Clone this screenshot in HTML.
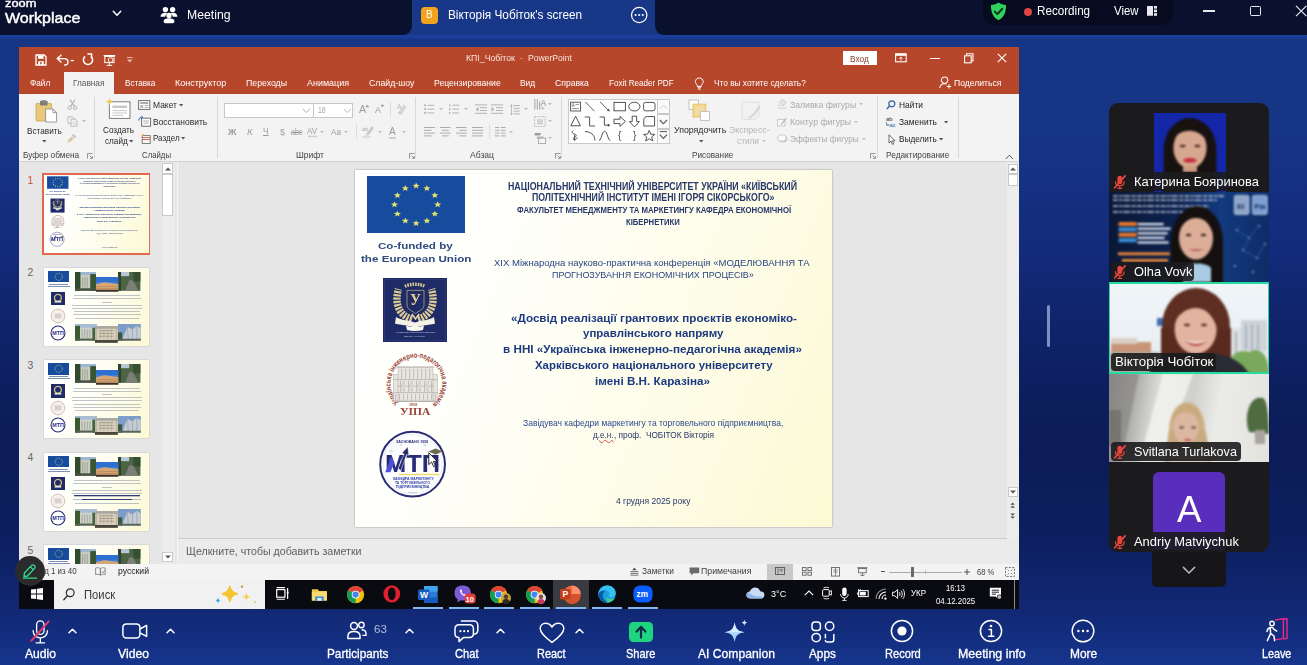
<!DOCTYPE html>
<html lang="uk">
<head>
<meta charset="utf-8">
<title>Zoom Meeting</title>
<style>
*{box-sizing:border-box;margin:0;padding:0}
html,body{width:1307px;height:665px;overflow:hidden}
body{position:relative;font-family:"Liberation Sans","DejaVu Sans",sans-serif;background:linear-gradient(180deg,#173585 0px,#173585 130px,#132b7b 250px,#0f2369 330px,#0d1e5d 400px,#0c1c58 450px,#0d1f60 540px,#112874 610px,#16358c 665px);color:#fff}
.abs{position:absolute}
.t{position:absolute;white-space:nowrap;transform-origin:0 0}
svg{overflow:visible}
svg text{font-family:"Liberation Sans","DejaVu Sans",sans-serif}
</style>
</head>
<body>
<div class="abs" style="left:0.00px;top:0.00px;width:1307.00px;height:35.00px;background:#0a112e;"></div>
<div class="abs" style="left:404.00px;top:0.00px;width:260.00px;height:35.00px;background:#183887;"></div>
<div class="abs" style="left:388.00px;top:0.00px;width:24.00px;height:35.00px;background:#0a112e;border-radius:0 0 9px 0"></div>
<div class="abs" style="left:655.00px;top:0.00px;width:24.00px;height:35.00px;background:#0a112e;border-radius:0 0 0 9px"></div>
<div class="abs" style="left:0.00px;top:35.00px;width:1307.00px;height:4.20px;background:linear-gradient(180deg,#1c42a2,#193b94);opacity:.85"></div>
<div class="t" id="t1" style="transform:scaleX(1.0846);left:5.00px;top:-3.67px;font-size:11.80px;line-height:14.16px;color:#fff;-webkit-text-stroke:.4px #fff;">zoom</div>
<div class="t" id="t2" style="transform:scaleX(1.0397);left:5.00px;top:8.72px;font-size:15.40px;line-height:18.48px;color:#fff;-webkit-text-stroke:.45px #fff;">Workplace</div>
<svg class="abs" style="left:111.00px;top:8.00px;" width="12" height="10" viewBox="0 0 12 10"><path d="M2.3 3.3 L6 7.2 L9.7 3.3" fill="none" stroke="#fff" stroke-width="1.5" stroke-linecap="round" stroke-linejoin="round"/></svg>
<svg class="abs" style="left:160.00px;top:6.00px;" width="18" height="18" viewBox="0 0 18 18"><g fill="#fff"><circle cx="5.4" cy="3.6" r="2.7"/><circle cx="12.6" cy="3.6" r="2.7"/>
<path d="M0.6 10.8 C0.6 7.9 2.8 6.8 5.4 6.8 C6.4 6.8 7.3 7 7.9 7.3 C6.5 8 5.5 9.1 5.2 10.8 Z"/>
<path d="M17.4 10.8 C17.4 7.9 15.2 6.8 12.6 6.8 C11.6 6.8 10.7 7 10.1 7.3 C11.5 8 12.5 9.1 12.8 10.8 Z"/>
<circle cx="9" cy="9.4" r="2.6"/>
<path d="M3.6 15.6 C3.6 13.2 5.9 12.3 9 12.3 C12.1 12.3 14.4 13.2 14.4 15.6 C14.4 16.7 13.6 17.3 12.6 17.3 L5.4 17.3 C4.4 17.3 3.6 16.7 3.6 15.6 Z"/></g></svg>
<div class="t" id="t3" style="transform:scaleX(0.9405);left:187.30px;top:7.00px;font-size:13.00px;line-height:15.60px;color:#fff;">Meeting</div>
<div class="abs" style="left:421.00px;top:6.50px;width:17.00px;height:17.00px;background:#f2a31d;border-radius:4px"></div>
<div class="t" id="t4" style="transform:scaleX(0.9892);left:426.20px;top:9.14px;font-size:10.00px;line-height:12.00px;color:#fff;">В</div>
<div class="t" id="t5" style="transform:scaleX(0.9074);left:447.50px;top:6.90px;font-size:13.00px;line-height:15.60px;color:#fff;">Вікторія Чобіток's screen</div>
<svg class="abs" style="left:630.00px;top:6.00px;" width="18" height="18" viewBox="0 0 18 18"><circle cx="9.2" cy="9" r="7.7" fill="none" stroke="#fff" stroke-width="1.2"/><circle cx="5.6" cy="9" r="1.05" fill="#fff"/><circle cx="9.2" cy="9" r="1.05" fill="#fff"/><circle cx="12.8" cy="9" r="1.05" fill="#fff"/></svg>
<div class="abs" style="left:983.00px;top:-10.00px;width:190.00px;height:35.00px;background:#060b20;border-radius:12px"></div>
<svg class="abs" style="left:989.00px;top:2.00px;" width="19" height="19" viewBox="0 0 19 19"><path d="M9.5 0.6 C11.5 2.2 14 2.9 17 3 C17.2 10 15 15.5 9.5 18.2 C4 15.5 1.8 10 2 3 C5 2.9 7.5 2.2 9.5 0.6 Z" fill="#2fd15a"/><path d="M5.8 9.6 L8.4 12.2 L13.2 6.8" fill="none" stroke="#0d2a1a" stroke-width="1.9" stroke-linecap="round" stroke-linejoin="round"/></svg>
<div class="abs" style="left:1023.70px;top:7.80px;width:8.50px;height:8.50px;background:#e0443e;border-radius:50%"></div>
<div class="t" id="t6" style="transform:scaleX(0.8960);left:1036.70px;top:3.10px;font-size:13.00px;line-height:15.60px;color:#fff;">Recording</div>
<div class="t" id="t7" style="transform:scaleX(0.8765);left:1114.30px;top:3.10px;font-size:13.00px;line-height:15.60px;color:#fff;">View</div>
<svg class="abs" style="left:1146.00px;top:5.00px;" width="12" height="12" viewBox="0 0 12 12"><g fill="#e8e8ee"><rect x="1" y="1" width="6" height="9.8" rx=".6"/><rect x="8" y="1" width="3" height="2.6"/><rect x="8" y="4.6" width="3" height="2.6"/><rect x="8" y="8.2" width="3" height="2.6"/></g></svg>
<div class="abs" style="left:1203.30px;top:10.20px;width:12.00px;height:1.60px;background:#e6e8f0;"></div>
<div class="abs" style="left:1250.00px;top:5.80px;width:10.50px;height:10.50px;background:transparent;border:1.4px solid #e6e8f0;border-radius:1.5px"></div>
<svg class="abs" style="left:1295.00px;top:5.00px;" width="12" height="12" viewBox="0 0 12 12"><path d="M1 .8 L11.4 11.2 M11.4 .8 L1 11.2" stroke="#e6e8f0" stroke-width="1.2" fill="none"/></svg>
<div class="abs" style="left:1047.00px;top:305.00px;width:3.00px;height:42.00px;background:#7f8fc4;border-radius:2px"></div>
<div class="abs" style="left:19.00px;top:47.00px;width:1000.00px;height:47.00px;background:#b7472a;"></div>
<div class="abs" style="left:19.00px;top:94.00px;width:1000.00px;height:67.00px;background:#f3f3f3;"></div>
<div class="abs" style="left:19.00px;top:160.50px;width:1000.00px;height:1.00px;background:#d2d2d2;"></div>
<div class="abs" style="left:19.00px;top:161.50px;width:1000.00px;height:402.00px;background:#e6e6e6;"></div>
<svg class="abs" style="left:34.50px;top:53.50px;" width="12" height="12" viewBox="0 0 12 12"><path d="M1 1 H9.2 L11 2.8 V11 H1 Z" fill="none" stroke="#fff" stroke-width="1.3"/><rect x="3" y="1.4" width="5.6" height="3.4" fill="#fff"/><rect x="3.2" y="7.2" width="5.6" height="3.6" fill="#fff"/><rect x="5.2" y="8" width="1.4" height="2.2" fill="#b7472a"/></svg>
<svg class="abs" style="left:55.50px;top:53.50px;" width="19" height="12" viewBox="0 0 19 12"><path d="M1.2 4.6 L5 1.2 M1.2 4.6 L5 8 M1.4 4.6 H8 C10.6 4.6 12 6.3 12 8 C12 9.9 10.6 11 8.6 11" fill="none" stroke="#fff" stroke-width="1.4" stroke-linecap="round"/><rect x="14.6" y="6" width="3.2" height="1.2" fill="#fff"/></svg>
<svg class="abs" style="left:81.50px;top:53.00px;" width="12" height="13" viewBox="0 0 12 13"><path d="M3.1 3.4 A4.6 4.6 0 1 0 8.9 3.4" fill="none" stroke="#fff" stroke-width="1.5"/><path d="M5.4 1 H9.6 V5.2" fill="none" stroke="#fff" stroke-width="1.4"/></svg>
<svg class="abs" style="left:102.50px;top:53.50px;" width="13" height="13" viewBox="0 0 13 13"><rect x=".6" y="1" width="11.6" height="1.3" fill="#fff"/><rect x="1.8" y="2.4" width="9.2" height="6.2" fill="none" stroke="#fff" stroke-width="1"/><circle cx="7.6" cy="6" r="2.3" fill="#b7472a" stroke="#fff" stroke-width=".9"/><path d="M6.4 8.6 V11 M3.6 11.4 H9.2" stroke="#fff" stroke-width="1"/></svg>
<svg class="abs" style="left:125.50px;top:56.00px;" width="8" height="8" viewBox="0 0 8 8"><rect x="1" y="1" width="5.6" height="1" fill="#e8b8a8"/><path d="M1 3.6 H6.6 L3.8 6.4 Z" fill="#e8b8a8"/></svg>
<div class="t" id="t8" style="transform:scaleX(0.9831);left:465.60px;top:53.28px;font-size:8.90px;line-height:10.68px;color:#f6e6e0;">КПІ_Чобіток</div>
<div class="t" id="t9" style="transform:scaleX(0.8758);left:520.00px;top:53.28px;font-size:8.90px;line-height:10.68px;color:#e3b3a5;">-</div>
<div class="t" id="t10" style="transform:scaleX(0.9650);left:527.50px;top:53.28px;font-size:8.90px;line-height:10.68px;color:#f6e6e0;">PowerPoint</div>
<div class="abs" style="left:842.50px;top:51.00px;width:34.80px;height:14.00px;background:#fff;"></div>
<div class="t" id="t11" style="transform:scaleX(0.9664);left:850.20px;top:54.06px;font-size:8.60px;line-height:10.32px;color:#8a3a28;">Вход</div>
<svg class="abs" style="left:895.00px;top:53.00px;" width="12" height="10" viewBox="0 0 12 10"><rect x=".6" y=".8" width="10.6" height="8" fill="none" stroke="#fff" stroke-width="1.1"/><rect x=".6" y=".8" width="10.6" height="2" fill="#fff"/><path d="M5.9 7.6 V4.2 M4.3 5.6 L5.9 4 L7.5 5.6" stroke="#fff" stroke-width=".9" fill="none"/></svg>
<div class="abs" style="left:929.80px;top:58.20px;width:10.20px;height:1.20px;background:#fff;"></div>
<svg class="abs" style="left:963.50px;top:52.50px;" width="10" height="11" viewBox="0 0 10 11"><rect x=".6" y="2.8" width="6.6" height="7" fill="none" stroke="#fff" stroke-width="1.1"/><path d="M2.6 2.6 V.8 H9 V8 H7.4" fill="none" stroke="#fff" stroke-width="1.1"/></svg>
<svg class="abs" style="left:996.50px;top:53.00px;" width="10" height="10" viewBox="0 0 10 10"><path d="M.8 .8 L9.2 9.2 M9.2 .8 L.8 9.2" stroke="#fff" stroke-width="1.15"/></svg>
<div class="abs" style="left:63.60px;top:71.80px;width:50.60px;height:23.00px;background:#f3f3f3;"></div>
<div class="t" id="t12" style="transform:scaleX(0.8880);left:30.30px;top:78.30px;font-size:9.30px;line-height:11.16px;color:#fff;">Файл</div>
<div class="t" id="t13" style="transform:scaleX(0.8767);left:124.70px;top:78.30px;font-size:9.30px;line-height:11.16px;color:#fff;">Вставка</div>
<div class="t" id="t14" style="transform:scaleX(0.9658);left:175.30px;top:78.30px;font-size:9.30px;line-height:11.16px;color:#fff;">Конструктор</div>
<div class="t" id="t15" style="transform:scaleX(0.9402);left:246.00px;top:78.30px;font-size:9.30px;line-height:11.16px;color:#fff;">Переходы</div>
<div class="t" id="t16" style="transform:scaleX(0.9621);left:306.60px;top:78.30px;font-size:9.30px;line-height:11.16px;color:#fff;">Анимация</div>
<div class="t" id="t17" style="transform:scaleX(0.9398);left:368.70px;top:78.30px;font-size:9.30px;line-height:11.16px;color:#fff;">Слайд-шоу</div>
<div class="t" id="t18" style="transform:scaleX(0.9290);left:434.30px;top:78.30px;font-size:9.30px;line-height:11.16px;color:#fff;">Рецензирование</div>
<div class="t" id="t19" style="transform:scaleX(0.9032);left:520.20px;top:78.30px;font-size:9.30px;line-height:11.16px;color:#fff;">Вид</div>
<div class="t" id="t20" style="transform:scaleX(0.9292);left:554.50px;top:78.30px;font-size:9.30px;line-height:11.16px;color:#fff;">Справка</div>
<div class="t" id="t21" style="transform:scaleX(0.8682);left:608.60px;top:78.30px;font-size:9.30px;line-height:11.16px;color:#fff;">Foxit Reader PDF</div>
<div class="t" id="t22" style="transform:scaleX(0.8872);left:73.20px;top:78.30px;font-size:9.30px;line-height:11.16px;color:#5a5a5a;">Главная</div>
<svg class="abs" style="left:694.00px;top:76.50px;" width="11" height="13" viewBox="0 0 11 13"><path d="M5.3 1 C2.8 1 1.4 2.8 1.4 4.6 C1.4 6.2 2.6 7 3.2 8.4 V9.4 H7.4 V8.4 C8 7 9.2 6.2 9.2 4.6 C9.2 2.8 7.8 1 5.3 1 Z M3.6 10.8 H7 M4.2 12.2 H6.4" fill="none" stroke="#fff" stroke-width="1"/></svg>
<div class="t" id="t23" style="transform:scaleX(0.8932);left:714.00px;top:78.30px;font-size:9.30px;line-height:11.16px;color:#fff;">Что вы хотите сделать?</div>
<svg class="abs" style="left:938.50px;top:76.00px;" width="13" height="13" viewBox="0 0 13 13"><circle cx="5.6" cy="4.2" r="3.2" fill="none" stroke="#fff" stroke-width="1.05"/><path d="M.8 12 C1 9.2 3 7.8 5.6 7.8 C6.4 7.8 7 7.9 7.6 8.1" fill="none" stroke="#fff" stroke-width="1.05"/><path d="M10 8.2 V12.6 M7.8 10.4 H12.2" stroke="#fff" stroke-width="1.05"/></svg>
<div class="t" id="t24" style="transform:scaleX(0.9232);left:953.80px;top:78.30px;font-size:9.30px;line-height:11.16px;color:#fff;">Поделиться</div>
<svg class="abs" style="left:34.50px;top:99.50px;" width="22.5" height="22.5" viewBox="0 0 22.5 22.5"><rect x="1" y="3.4" width="15.6" height="17.6" rx="1" fill="#e9c77b" stroke="#c9a356" stroke-width=".8"/>
<rect x="5" y=".8" width="7.6" height="4.6" rx="1" fill="#7c7c7c"/><rect x="6.8" y="0" width="4" height="2.2" rx="1" fill="#8d8d8d"/>
<path d="M10.6 9 H18 L21.6 12.6 V22 H10.6 Z" fill="#fff" stroke="#8e8e8e" stroke-width=".9"/><path d="M18 9 V12.6 H21.6" fill="none" stroke="#8e8e8e" stroke-width=".9"/></svg>
<div class="t" id="t25" style="transform:scaleX(0.8556);left:26.60px;top:124.51px;font-size:9.60px;line-height:11.52px;color:#2b2b2b;">Вставить</div>
<svg class="abs" style="left:41.55px;top:139.74px;" width="4.5" height="2.7" viewBox="0 0 5 3"><path d="M0 0 H5 L2.5 2.8 Z" fill="#555"/></svg>
<svg class="abs" style="left:67.00px;top:98.50px;" width="11" height="11" viewBox="0 0 11 11"><path d="M3 .6 L7.4 7.4 M8 .6 L3.6 7.4" stroke="#b5b5b5" stroke-width="1.1"/><circle cx="2.8" cy="8.8" r="1.7" fill="none" stroke="#b5b5b5" stroke-width="1"/><circle cx="8.2" cy="8.8" r="1.7" fill="none" stroke="#b5b5b5" stroke-width="1"/></svg>
<svg class="abs" style="left:66.50px;top:116.00px;" width="11" height="11" viewBox="0 0 11 11"><path d="M1 .8 H5.4 L7 2.4 V7.6 H1 Z" fill="#f6f6f6" stroke="#b5b5b5" stroke-width=".9"/><path d="M4 3.2 H8.4 L10 4.8 V10.2 H4 Z" fill="#f6f6f6" stroke="#b5b5b5" stroke-width=".9"/><path d="M5.4 6 H8.6 M5.4 7.8 H8.6" stroke="#c4c4c4" stroke-width=".7"/></svg>
<svg class="abs" style="left:81.60px;top:120.48px;" width="4" height="2.4" viewBox="0 0 5 3"><path d="M0 0 H5 L2.5 2.8 Z" fill="#bdbdbd"/></svg>
<svg class="abs" style="left:66.50px;top:132.50px;" width="11" height="10" viewBox="0 0 11 10"><path d="M6.4 .8 L9.6 3.6 L7.8 5.6 L4.6 2.8 Z" fill="#c9c9c9"/><path d="M4.4 3.6 L6.8 5.8 L3 9.2 L.8 9.4 L1 7 Z" fill="#d9c9a5"/></svg>
<div class="t" id="t26" style="transform:scaleX(0.9001);left:22.80px;top:149.89px;font-size:9.20px;line-height:11.04px;color:#444;">Буфер обмена</div>
<svg class="abs" style="left:86.60px;top:153.00px;" width="6" height="6" viewBox="0 0 6 6"><path d="M.5 5.5 V.5 H5.5" fill="none" stroke="#8a8a8a" stroke-width=".9"/><path d="M2.4 2.4 L5.2 5.2 M5.4 3 V5.4 H3" fill="none" stroke="#8a8a8a" stroke-width=".9"/></svg>
<div class="abs" style="left:94.30px;top:97.00px;width:1.00px;height:61.00px;background:#d8d8d8;"></div>
<svg class="abs" style="left:105.50px;top:97.50px;" width="25" height="22" viewBox="0 0 25 22"><rect x="3.4" y="3.8" width="20.6" height="16.6" fill="#fff" stroke="#7d7d7d" stroke-width="1"/>
<rect x="6.4" y="7.6" width="14.6" height="2.4" fill="#c8c8c8"/><path d="M6.4 12.6 H21 M6.4 15 H21 M6.4 17.4 H17" stroke="#c2c2c2" stroke-width=".9"/>
<path d="M3.6 0 L4.6 2.6 L7.2 3.6 L4.6 4.6 L3.6 7.2 L2.6 4.6 L0 3.6 L2.6 2.6 Z" fill="#f4c542"/></svg>
<div class="t" id="t27" style="transform:scaleX(0.8500);left:103.00px;top:123.71px;font-size:9.60px;line-height:11.52px;color:#2b2b2b;">Создать</div>
<div class="t" id="t28" style="transform:scaleX(0.8506);left:104.90px;top:135.41px;font-size:9.60px;line-height:11.52px;color:#2b2b2b;">слайд</div>
<svg class="abs" style="left:129.35px;top:140.34px;" width="4.5" height="2.7" viewBox="0 0 5 3"><path d="M0 0 H5 L2.5 2.8 Z" fill="#555"/></svg>
<svg class="abs" style="left:138.00px;top:99.50px;" width="12.5" height="10" viewBox="0 0 12.5 10"><rect x=".6" y=".6" width="11.2" height="8.8" fill="#fff" stroke="#6e6e6e" stroke-width="1"/><rect x="2.2" y="2.2" width="8" height="1.6" fill="#9a9a9a"/><rect x="2.2" y="5" width="3.2" height="3" fill="#bdbdbd"/><path d="M6.6 5.4 H10.2 M6.6 7.4 H10.2" stroke="#9a9a9a" stroke-width=".8"/></svg>
<div class="t" id="t29" style="transform:scaleX(0.8838);left:152.80px;top:98.81px;font-size:9.60px;line-height:11.52px;color:#2b2b2b;">Макет</div>
<svg class="abs" style="left:178.68px;top:103.61px;" width="4.25" height="2.55" viewBox="0 0 5 3"><path d="M0 0 H5 L2.5 2.8 Z" fill="#555"/></svg>
<svg class="abs" style="left:137.50px;top:116.00px;" width="13" height="11" viewBox="0 0 13 11"><rect x="3.6" y="2.2" width="9" height="8" fill="#fff" stroke="#6e6e6e" stroke-width="1"/><path d="M5.4 5 H10.8 M5.4 7.2 H10.8" stroke="#9a9a9a" stroke-width=".8"/><path d="M.8 4.6 C.8 2 2.6 .8 4.6 1.2 M3.4 0 L4.8 1.2 L3.4 2.6" fill="none" stroke="#2f72c4" stroke-width="1"/></svg>
<div class="t" id="t30" style="transform:scaleX(0.8822);left:152.80px;top:115.81px;font-size:9.60px;line-height:11.52px;color:#2b2b2b;">Восстановить</div>
<svg class="abs" style="left:141.00px;top:132.50px;" width="10" height="11" viewBox="0 0 10 11"><rect x="1.2" y="2.6" width="8" height="7.8" fill="#fff" stroke="#6e6e6e" stroke-width=".9"/><path d="M1.2 4.6 H9.2 M1.2 6.6 H9.2" stroke="#c0573a" stroke-width=".9"/><path d="M1.6 0 L2.1 1.2 L3.3 1.7 L2.1 2.2 L1.6 3.4 L1.1 2.2 L0 1.7 L1.1 1.2 Z" fill="#f4c542"/></svg>
<div class="t" id="t31" style="transform:scaleX(0.8386);left:152.80px;top:132.21px;font-size:9.60px;line-height:11.52px;color:#2b2b2b;">Раздел</div>
<svg class="abs" style="left:181.28px;top:137.01px;" width="4.25" height="2.55" viewBox="0 0 5 3"><path d="M0 0 H5 L2.5 2.8 Z" fill="#555"/></svg>
<div class="t" id="t32" style="transform:scaleX(0.8479);left:141.50px;top:149.89px;font-size:9.20px;line-height:11.04px;color:#444;">Слайды</div>
<div class="abs" style="left:217.20px;top:97.00px;width:1.00px;height:61.00px;background:#d8d8d8;"></div>
<div class="abs" style="left:224.00px;top:102.60px;width:89.60px;height:15.40px;background:#fff;border:1px solid #c8c8c8"></div>
<div class="abs" style="left:313.00px;top:102.60px;width:40.00px;height:15.40px;background:#fff;border:1px solid #c8c8c8"></div>
<svg class="abs" style="left:301.50px;top:107.50px;" width="9" height="6" viewBox="0 0 9 6"><path d="M.8 .8 L4.4 4.6 L8 .8" fill="none" stroke="#b5b5b5" stroke-width="1"/></svg>
<svg class="abs" style="left:343.00px;top:107.50px;" width="9" height="6" viewBox="0 0 9 6"><path d="M.8 .8 L4.4 4.6 L8 .8" fill="none" stroke="#b5b5b5" stroke-width="1"/></svg>
<div class="t" id="t33" style="transform:scaleX(0.7860);left:318.20px;top:105.07px;font-size:8.80px;line-height:10.56px;color:#a8a8a8;">18</div>
<div class="t" id="t34" style="transform:scaleX(1.0263);left:358.60px;top:103.36px;font-size:10.50px;line-height:12.60px;color:#9d9d9d;">A</div>
<svg class="abs" style="left:364.80px;top:104.00px;" width="5" height="4" viewBox="0 0 5 4"><path d="M.4 3.2 L2.4 .8 L4.4 3.2 Z" fill="#9d9d9d"/></svg>
<div class="t" id="t35" style="transform:scaleX(0.9974);left:375.00px;top:104.78px;font-size:9.00px;line-height:10.80px;color:#9d9d9d;">A</div>
<svg class="abs" style="left:380.20px;top:104.40px;" width="5" height="4" viewBox="0 0 5 4"><path d="M.4 .8 L2.4 3.2 L4.4 .8 Z" fill="#9d9d9d"/></svg>
<div class="abs" style="left:390.20px;top:102.00px;width:1.00px;height:15.00px;background:#dcdcdc;"></div>
<svg class="abs" style="left:396.50px;top:103.00px;" width="11" height="12" viewBox="0 0 11 12"><path d="M2 8.6 L6.6 1.4 L9.8 3.6 L5.4 10.6 Z" fill="#d6d6d6"/><path d="M.8 10.8 L2 8.6 L5.4 10.6 L4.4 11.6 Z" fill="#e5bcc0"/><text x="0" y="6" font-size="6.5" fill="#bdbdbd">A</text></svg>
<div class="t" id="t36" style="transform:scaleX(0.9686);left:228.00px;top:126.11px;font-size:9.60px;line-height:11.52px;color:#9b9b9b;font-weight:700;">Ж</div>
<div class="t" id="t37" style="transform:scaleX(1.0077);left:247.30px;top:126.11px;font-size:9.60px;line-height:11.52px;color:#9b9b9b;font-style:italic;">К</div>
<div class="t" id="t38" style="transform:scaleX(0.9143);left:262.60px;top:126.29px;font-size:9.20px;line-height:11.04px;color:#9b9b9b;text-decoration:underline;">Ч</div>
<div class="t" id="t39" style="transform:scaleX(0.7493);left:280.40px;top:126.11px;font-size:9.60px;line-height:11.52px;color:#9b9b9b;text-shadow:.8px .8px 0 #cfcfcf;">S</div>
<div class="t" id="t40" style="transform:scaleX(0.8361);left:290.50px;top:126.65px;font-size:8.40px;line-height:10.08px;color:#9b9b9b;text-decoration:line-through;">abc</div>
<div class="t" id="t41" style="transform:scaleX(0.9467);left:307.00px;top:125.65px;font-size:8.40px;line-height:10.08px;color:#9b9b9b;">AV</div>
<svg class="abs" style="left:307.50px;top:134.60px;" width="9" height="3" viewBox="0 0 9 3"><path d="M.6 1.4 H8.4 M1.8 .2 L.6 1.4 L1.8 2.6 M7.2 .2 L8.4 1.4 L7.2 2.6" fill="none" stroke="#b5b5b5" stroke-width=".7"/></svg>
<svg class="abs" style="left:320.00px;top:130.88px;" width="4" height="2.4" viewBox="0 0 5 3"><path d="M0 0 H5 L2.5 2.8 Z" fill="#bdbdbd"/></svg>
<div class="t" id="t42" style="transform:scaleX(0.8511);left:331.00px;top:126.11px;font-size:9.60px;line-height:11.52px;color:#9b9b9b;">Aa</div>
<svg class="abs" style="left:343.80px;top:130.88px;" width="4" height="2.4" viewBox="0 0 5 3"><path d="M0 0 H5 L2.5 2.8 Z" fill="#bdbdbd"/></svg>
<div class="abs" style="left:355.60px;top:124.00px;width:1.00px;height:15.00px;background:#dcdcdc;"></div>
<svg class="abs" style="left:361.50px;top:124.50px;" width="13" height="13" viewBox="0 0 13 13"><path d="M4.2 8.6 L10 1.2 L12.2 2.8 L6.6 10.2 Z" fill="#c9c9c9"/><path d="M3 10.6 L4.2 8.6 L6.6 10.2 L5 11.2 Z" fill="#dadada"/><text x="0" y="6" font-size="5.6" fill="#adadad">ab</text><rect x="0" y="11.2" width="9" height="1.6" fill="#d9d9d9"/></svg>
<svg class="abs" style="left:377.60px;top:130.88px;" width="4" height="2.4" viewBox="0 0 5 3"><path d="M0 0 H5 L2.5 2.8 Z" fill="#bdbdbd"/></svg>
<div class="t" id="t43" style="transform:scaleX(1.0005);left:389.40px;top:125.75px;font-size:10.20px;line-height:12.24px;color:#9b9b9b;">A</div>
<div class="abs" style="left:389.20px;top:137.00px;width:7.20px;height:1.60px;background:#d0d0d0;"></div>
<svg class="abs" style="left:401.80px;top:130.88px;" width="4" height="2.4" viewBox="0 0 5 3"><path d="M0 0 H5 L2.5 2.8 Z" fill="#bdbdbd"/></svg>
<div class="t" id="t44" style="transform:scaleX(0.9261);left:296.00px;top:149.89px;font-size:9.20px;line-height:11.04px;color:#444;">Шрифт</div>
<svg class="abs" style="left:408.60px;top:153.00px;" width="6" height="6" viewBox="0 0 6 6"><path d="M.5 5.5 V.5 H5.5" fill="none" stroke="#8a8a8a" stroke-width=".9"/><path d="M2.4 2.4 L5.2 5.2 M5.4 3 V5.4 H3" fill="none" stroke="#8a8a8a" stroke-width=".9"/></svg>
<div class="abs" style="left:414.70px;top:97.00px;width:1.00px;height:61.00px;background:#d8d8d8;"></div>
<svg class="abs" style="left:423.80px;top:104.00px;" width="10.5" height="10.5" viewBox="0 0 10.5 10.5"><g fill="#b3b3b3"><circle cx="1.1" cy="1.3" r="1.1"/><circle cx="1.1" cy="5.1" r="1.1"/><circle cx="1.1" cy="8.9" r="1.1"/><rect x="3.4" y=".8" width="6.8" height="1"/><rect x="3.4" y="4.6" width="6.8" height="1"/><rect x="3.4" y="8.4" width="6.8" height="1"/></g></svg>
<svg class="abs" style="left:439.20px;top:108.28px;" width="4" height="2.4" viewBox="0 0 5 3"><path d="M0 0 H5 L2.5 2.8 Z" fill="#bdbdbd"/></svg>
<svg class="abs" style="left:448.60px;top:104.00px;" width="10.5" height="10.5" viewBox="0 0 10.5 10.5"><g fill="#b3b3b3"><rect x="0" y=".4" width="1.4" height="2"/><rect x="0" y="4.2" width="1.4" height="2"/><rect x="0" y="8" width="1.4" height="2"/><rect x="3.4" y=".8" width="6.8" height="1"/><rect x="3.4" y="4.6" width="6.8" height="1"/><rect x="3.4" y="8.4" width="6.8" height="1"/></g></svg>
<svg class="abs" style="left:463.80px;top:108.28px;" width="4" height="2.4" viewBox="0 0 5 3"><path d="M0 0 H5 L2.5 2.8 Z" fill="#bdbdbd"/></svg>
<svg class="abs" style="left:474.80px;top:104.00px;" width="12.4" height="10.5" viewBox="0 0 12.4 10.5"><g fill="#b3b3b3"><rect x="0" y=".4" width="12" height="1"/><rect x="5" y="3.2" width="7" height="1"/><rect x="5" y="6" width="7" height="1"/><rect x="0" y="8.8" width="12" height="1"/><path d="M3.6 3 V7.4 L.4 5.2 Z"/></g></svg>
<svg class="abs" style="left:490.90px;top:104.00px;" width="12.4" height="10.5" viewBox="0 0 12.4 10.5"><g fill="#b3b3b3"><rect x="0" y=".4" width="12" height="1"/><rect x="5" y="3.2" width="7" height="1"/><rect x="5" y="6" width="7" height="1"/><rect x="0" y="8.8" width="12" height="1"/><path d="M.4 3 V7.4 L3.6 5.2 Z"/></g></svg>
<svg class="abs" style="left:510.40px;top:103.60px;" width="10" height="11.5" viewBox="0 0 10 11.5"><g fill="#b3b3b3"><rect x="3.6" y="1" width="6.2" height="1"/><rect x="3.6" y="3.8" width="6.2" height="1"/><rect x="3.6" y="6.6" width="6.2" height="1"/><rect x="3.6" y="9.4" width="6.2" height="1"/><path d="M1.4 0 L2.8 2.2 H0 Z M1.4 11.4 L2.8 9.2 H0 Z"/><rect x="1" y="2" width=".8" height="7.4"/></g></svg>
<svg class="abs" style="left:523.60px;top:108.28px;" width="4" height="2.4" viewBox="0 0 5 3"><path d="M0 0 H5 L2.5 2.8 Z" fill="#bdbdbd"/></svg>
<svg class="abs" style="left:533.80px;top:97.80px;" width="12" height="12.6" viewBox="0 0 12 12.6"><g fill="#a5a5a5"><rect x=".4" y="1" width="1" height="10.6"/><rect x="2.8" y="1" width="1" height="10.6"/><rect x="5.2" y="3.4" width="1" height="8.2"/></g><text x="6.4" y="8.4" font-size="8.4" fill="#8f8f8f">A</text><path d="M8.6 11.6 V9.4 M7.4 10.6 L8.6 9.2 L9.8 10.6" stroke="#a5a5a5" stroke-width=".8" fill="none"/></svg>
<svg class="abs" style="left:548.40px;top:103.48px;" width="4" height="2.4" viewBox="0 0 5 3"><path d="M0 0 H5 L2.5 2.8 Z" fill="#bdbdbd"/></svg>
<svg class="abs" style="left:533.80px;top:115.50px;" width="12" height="11" viewBox="0 0 12 11"><rect x=".6" y=".6" width="10.6" height="9.8" fill="none" stroke="#b0b0b0" stroke-width=".9" stroke-dasharray="1.6 1"/><path d="M3 4 H9 M3 5.8 H9 M3 7.6 H9" stroke="#b3b3b3" stroke-width=".9"/></svg>
<svg class="abs" style="left:548.40px;top:119.88px;" width="4" height="2.4" viewBox="0 0 5 3"><path d="M0 0 H5 L2.5 2.8 Z" fill="#bdbdbd"/></svg>
<svg class="abs" style="left:533.80px;top:131.60px;" width="12.4" height="12" viewBox="0 0 12.4 12"><path d="M.6 1 H7.4 L5.8 3.4 H.6 Z" fill="#9e9e9e"/><path d="M2.8 4.4 H10 L8.4 6.8 H2.8 Z" fill="#b9b9b9"/><rect x="4.6" y="6.2" width="7" height="5.4" fill="#f7f7f7" stroke="#a5a5a5" stroke-width=".9"/></svg>
<svg class="abs" style="left:548.40px;top:136.88px;" width="4" height="2.4" viewBox="0 0 5 3"><path d="M0 0 H5 L2.5 2.8 Z" fill="#bdbdbd"/></svg>
<svg class="abs" style="left:423.80px;top:126.60px;" width="11" height="11.2" viewBox="0 0 11 11.2"><rect x="0" y="0.0" width="11.0" height="1" fill="#adadad"/><rect x="0" y="2.8" width="7.5" height="1" fill="#adadad"/><rect x="0" y="5.6" width="11.0" height="1" fill="#adadad"/><rect x="0" y="8.4" width="7.5" height="1" fill="#adadad"/></svg>
<svg class="abs" style="left:440.00px;top:126.60px;" width="10.6" height="11" viewBox="0 0 10.6 11"><g fill="#adadad"><rect x="0" y="0" width="10.6" height="1"/><rect x="1.8" y="2.8" width="7" height="1"/><rect x="0" y="5.6" width="10.6" height="1"/><rect x="1.8" y="8.4" width="7" height="1"/></g></svg>
<svg class="abs" style="left:456.30px;top:126.60px;" width="10.6" height="11" viewBox="0 0 10.6 11"><g fill="#adadad"><rect x="0" y="0" width="10.6" height="1"/><rect x="3.4" y="2.8" width="7.2" height="1"/><rect x="0" y="5.6" width="10.6" height="1"/><rect x="3.4" y="8.4" width="7.2" height="1"/></g></svg>
<svg class="abs" style="left:472.00px;top:126.60px;" width="11" height="11.2" viewBox="0 0 11 11.2"><rect x="0" y="0.0" width="11.0" height="1" fill="#adadad"/><rect x="0" y="2.8" width="11.0" height="1" fill="#adadad"/><rect x="0" y="5.6" width="11.0" height="1" fill="#adadad"/><rect x="0" y="8.4" width="11.0" height="1" fill="#adadad"/></svg>
<div class="abs" style="left:488.80px;top:124.00px;width:1.00px;height:15.00px;background:#dcdcdc;"></div>
<svg class="abs" style="left:494.80px;top:126.60px;" width="10.6" height="11" viewBox="0 0 10.6 11"><g fill="#adadad"><rect x="0" y="0" width="4.6" height="1"/><rect x="0" y="2.8" width="4.6" height="1"/><rect x="0" y="5.6" width="4.6" height="1"/><rect x="0" y="8.4" width="4.6" height="1"/><rect x="6" y="0" width="4.6" height="1"/><rect x="6" y="2.8" width="4.6" height="1"/><rect x="6" y="5.6" width="4.6" height="1"/><rect x="6" y="8.4" width="4.6" height="1"/></g></svg>
<svg class="abs" style="left:508.60px;top:130.88px;" width="4" height="2.4" viewBox="0 0 5 3"><path d="M0 0 H5 L2.5 2.8 Z" fill="#bdbdbd"/></svg>
<div class="t" id="t45" style="transform:scaleX(0.9309);left:470.00px;top:149.89px;font-size:9.20px;line-height:11.04px;color:#444;">Абзац</div>
<svg class="abs" style="left:555.00px;top:153.00px;" width="6" height="6" viewBox="0 0 6 6"><path d="M.5 5.5 V.5 H5.5" fill="none" stroke="#8a8a8a" stroke-width=".9"/><path d="M2.4 2.4 L5.2 5.2 M5.4 3 V5.4 H3" fill="none" stroke="#8a8a8a" stroke-width=".9"/></svg>
<div class="abs" style="left:561.00px;top:97.00px;width:1.00px;height:61.00px;background:#d8d8d8;"></div>
<div class="abs" style="left:568.40px;top:99.00px;width:101.60px;height:44.60px;background:#fff;border:1px solid #c9c9c9"></div>
<svg class="abs" style="left:568.40px;top:99.00px;" width="101.6" height="44.6" viewBox="0 0 101.6 44.6"><rect x="2.6" y="3.2" width="10" height="8.8" fill="#fff" stroke="#4a4a4a" stroke-width=".9"/><text x="3.6" y="8.2" font-size="4.6" fill="#4a4a4a">A</text><path d="M7.4 5.6 H11 M4 9.6 H11" stroke="#4a4a4a" stroke-width=".6"/><path d="M17.4 3 L26.4 12.2" stroke="#4a4a4a" stroke-width=".9"/><path d="M32.2 3 L41.4 12.2" stroke="#4a4a4a" stroke-width=".9"/><path d="M41.8 12.6 L38.8 11.6 L40.8 9.8 Z" fill="#4a4a4a"/><rect x="46" y="3.4" width="11.4" height="8.4" fill="none" stroke="#4a4a4a" stroke-width=".95"/><ellipse cx="66.4" cy="7.6" rx="5.6" ry="4.4" fill="none" stroke="#4a4a4a" stroke-width=".95"/><rect x="75.6" y="3.4" width="11.4" height="8.4" rx="2" fill="none" stroke="#4a4a4a" stroke-width=".95"/><path d="M7.6 17.2 L12.4 26.8 H2.8 Z" fill="none" stroke="#4a4a4a" stroke-width=".95"/><path d="M16.8 18 H21.6 V27 H27" fill="none" stroke="#4a4a4a" stroke-width=".95"/><path d="M31.6 18 H36.4 V26.2 H41" fill="none" stroke="#4a4a4a" stroke-width=".95"/><path d="M42.4 26.2 L39.8 24.6 V27.8 Z" fill="#4a4a4a"/><path d="M46 20.2 H52 V17.4 L57.4 22.4 L52 27.4 V24.6 H46 Z" fill="none" stroke="#4a4a4a" stroke-width=".95"/><path d="M64.2 17.2 H68.6 V22.6 H71.4 L66.4 28 L61.4 22.6 H64.2 Z" fill="none" stroke="#4a4a4a" stroke-width=".95"/><path d="M75.8 20.8 C75.8 18.4 77.4 17.6 79.4 17.6 H86.6 V27 H75.8 Z" fill="none" stroke="#4a4a4a" stroke-width=".95"/><path d="M5.4 31.6 C3.4 32.6 3.8 34.6 6.2 35 C9 35.4 8.8 37.8 6.6 38.2 C5 38.6 4.8 40.6 6.6 41.2 M6.6 36 V41.4 L9.6 38.6" fill="none" stroke="#4a4a4a" stroke-width=".95"/><path d="M17 32.6 C23 32.6 26.6 36 27 41.4" fill="none" stroke="#4a4a4a" stroke-width=".95"/><path d="M31 41.4 C33.6 41.4 33.6 32.4 36.6 32.4 C39.6 32.4 39.6 41.4 42.4 41.4" fill="none" stroke="#4a4a4a" stroke-width=".95"/><path d="M81.2 31.4 L82.8 35.2 L86.8 35.4 L83.6 38 L84.8 42 L81.2 39.8 L77.6 42 L78.8 38 L75.6 35.4 L79.6 35.2 Z" fill="none" stroke="#4a4a4a" stroke-width=".95"/></svg>
<div class="t" id="t46" style="transform:scaleX(0.8918);left:618.20px;top:128.61px;font-size:11.40px;line-height:13.68px;color:#4a4a4a;">{</div>
<div class="t" id="t47" style="transform:scaleX(0.8918);left:633.20px;top:128.61px;font-size:11.40px;line-height:13.68px;color:#4a4a4a;">}</div>
<div class="abs" style="left:657.40px;top:99.00px;width:12.60px;height:15.00px;background:#fafafa;border:1px solid #c9c9c9"></div>
<div class="abs" style="left:657.40px;top:113.80px;width:12.60px;height:15.00px;background:#fafafa;border:1px solid #c9c9c9"></div>
<div class="abs" style="left:657.40px;top:128.60px;width:12.60px;height:15.00px;background:#fafafa;border:1px solid #c9c9c9"></div>
<svg class="abs" style="left:659.40px;top:103.50px;" width="9" height="6" viewBox="0 0 9 6"><path d="M.8 5 L4.4 1.2 L8 5" fill="none" stroke="#d0d0d0" stroke-width="1"/></svg>
<svg class="abs" style="left:659.40px;top:118.60px;" width="9" height="6" viewBox="0 0 9 6"><path d="M.8 1 L4.4 4.8 L8 1" fill="none" stroke="#555" stroke-width="1.1"/></svg>
<svg class="abs" style="left:659.40px;top:131.20px;" width="9" height="9" viewBox="0 0 9 9"><path d="M.8 .6 H8" stroke="#555" stroke-width="1"/><path d="M.8 3.6 L4.4 7.4 L8 3.6" fill="none" stroke="#555" stroke-width="1.1"/></svg>
<svg class="abs" style="left:689.00px;top:99.50px;" width="21" height="21" viewBox="0 0 21 21"><rect x="0" y="0" width="9.4" height="9.4" fill="#fff" stroke="#bdbdbd" stroke-width=".9"/><rect x="3.4" y="3.6" width="14" height="14" fill="#eccb7e"/><rect x="5.2" y="5.4" width="10.4" height="10.4" fill="#f3dca0"/><rect x="11.4" y="11.4" width="9" height="9" fill="#fff" stroke="#bdbdbd" stroke-width=".9"/></svg>
<div class="t" id="t48" style="transform:scaleX(0.9143);left:673.80px;top:124.21px;font-size:9.60px;line-height:11.52px;color:#2b2b2b;">Упорядочить</div>
<svg class="abs" style="left:698.55px;top:139.94px;" width="4.5" height="2.7" viewBox="0 0 5 3"><path d="M0 0 H5 L2.5 2.8 Z" fill="#555"/></svg>
<svg class="abs" style="left:740.00px;top:99.50px;" width="21" height="21" viewBox="0 0 21 21"><path d="M2 2 H19 V15 L15 19.4 H2 Z" fill="#f1f1f1" stroke="#dcdcdc" stroke-width=".9"/><path d="M8 17.4 C11 16.4 16 11 18.6 5.4 L20.4 6.8 C18 12 13 17 9.6 19 Z" fill="#d5d5d5"/></svg>
<div class="t" id="t49" style="transform:scaleX(0.9092);left:729.40px;top:124.21px;font-size:9.60px;line-height:11.52px;color:#b5b5b5;">Экспресс-</div>
<div class="t" id="t50" style="transform:scaleX(0.8622);left:737.00px;top:135.41px;font-size:9.60px;line-height:11.52px;color:#b5b5b5;">стили</div>
<svg class="abs" style="left:761.50px;top:140.48px;" width="4" height="2.4" viewBox="0 0 5 3"><path d="M0 0 H5 L2.5 2.8 Z" fill="#c2c2c2"/></svg>
<svg class="abs" style="left:777.00px;top:98.00px;" width="10" height="11" viewBox="0 0 10 11"><path d="M2.4 4.6 L5.8 1.2 L9.2 4.6 L5.8 8 Z" fill="#e4e4e4" stroke="#c4c4c4" stroke-width=".8"/><path d="M1.2 7.4 C1.2 8.8 2.8 8.8 2.8 7.4 L2 5.6 Z" fill="#cfcfcf"/><rect x=".6" y="9.4" width="9" height="1.4" fill="#dcdcdc"/></svg>
<div class="t" id="t51" style="transform:scaleX(0.9022);left:789.50px;top:98.51px;font-size:9.60px;line-height:11.52px;color:#aaaaaa;">Заливка фигуры</div>
<svg class="abs" style="left:858.60px;top:103.48px;" width="4" height="2.4" viewBox="0 0 5 3"><path d="M0 0 H5 L2.5 2.8 Z" fill="#c2c2c2"/></svg>
<svg class="abs" style="left:777.00px;top:116.50px;" width="10" height="10" viewBox="0 0 10 10"><rect x=".6" y="2.4" width="7.4" height="6.6" fill="#fafafa" stroke="#c4c4c4" stroke-width=".9"/><path d="M4 6.6 L8.6 .8 L9.8 1.8 L5.2 7.4 L3.6 8 Z" fill="#bdbdbd"/></svg>
<div class="t" id="t52" style="transform:scaleX(0.9107);left:789.50px;top:116.41px;font-size:9.60px;line-height:11.52px;color:#aaaaaa;">Контур фигуры</div>
<svg class="abs" style="left:854.20px;top:121.28px;" width="4" height="2.4" viewBox="0 0 5 3"><path d="M0 0 H5 L2.5 2.8 Z" fill="#c2c2c2"/></svg>
<svg class="abs" style="left:777.00px;top:134.00px;" width="11" height="9" viewBox="0 0 11 9"><ellipse cx="6" cy="5.2" rx="4.6" ry="3.4" fill="#d2d2d2"/><ellipse cx="4.8" cy="4" rx="4.2" ry="3.2" fill="#fafafa" stroke="#bdbdbd" stroke-width=".8"/></svg>
<div class="t" id="t53" style="transform:scaleX(0.8605);left:789.50px;top:133.21px;font-size:9.60px;line-height:11.52px;color:#aaaaaa;">Эффекты фигуры</div>
<svg class="abs" style="left:862.00px;top:138.08px;" width="4" height="2.4" viewBox="0 0 5 3"><path d="M0 0 H5 L2.5 2.8 Z" fill="#c2c2c2"/></svg>
<div class="t" id="t54" style="transform:scaleX(0.8924);left:691.70px;top:149.89px;font-size:9.20px;line-height:11.04px;color:#444;">Рисование</div>
<svg class="abs" style="left:870.40px;top:153.00px;" width="6" height="6" viewBox="0 0 6 6"><path d="M.5 5.5 V.5 H5.5" fill="none" stroke="#8a8a8a" stroke-width=".9"/><path d="M2.4 2.4 L5.2 5.2 M5.4 3 V5.4 H3" fill="none" stroke="#8a8a8a" stroke-width=".9"/></svg>
<div class="abs" style="left:876.80px;top:97.00px;width:1.00px;height:61.00px;background:#d8d8d8;"></div>
<svg class="abs" style="left:885.50px;top:99.50px;" width="10" height="10" viewBox="0 0 10 10"><circle cx="5.8" cy="3.8" r="3" fill="none" stroke="#2e5fa8" stroke-width="1.2"/><path d="M3.6 6 L.8 9" stroke="#2e5fa8" stroke-width="1.4"/></svg>
<div class="t" id="t55" style="transform:scaleX(0.8762);left:899.00px;top:98.51px;font-size:9.60px;line-height:11.52px;color:#1f1f1f;">Найти</div>
<svg class="abs" style="left:885.50px;top:116.00px;" width="11" height="12" viewBox="0 0 11 12"><text x="0" y="5" font-size="6" fill="#333">ab</text><text x="3.2" y="11.2" font-size="6" fill="#2e5fa8">ac</text><path d="M.6 6.2 V9 H2.4 M1.6 8 L2.6 9 L1.6 10" stroke="#2e5fa8" stroke-width=".7" fill="none"/></svg>
<div class="t" id="t56" style="transform:scaleX(0.8788);left:899.00px;top:116.41px;font-size:9.60px;line-height:11.52px;color:#1f1f1f;">Заменить</div>
<svg class="abs" style="left:944.48px;top:121.21px;" width="4.25" height="2.55" viewBox="0 0 5 3"><path d="M0 0 H5 L2.5 2.8 Z" fill="#555"/></svg>
<svg class="abs" style="left:887.50px;top:133.50px;" width="8" height="11" viewBox="0 0 8 11"><path d="M1 .8 V9 L3 7.2 L4.4 10.4 L5.8 9.8 L4.4 6.8 H7 Z" fill="#fff" stroke="#444" stroke-width=".8"/></svg>
<div class="t" id="t57" style="transform:scaleX(0.8562);left:899.00px;top:133.21px;font-size:9.60px;line-height:11.52px;color:#1f1f1f;">Выделить</div>
<svg class="abs" style="left:939.48px;top:138.01px;" width="4.25" height="2.55" viewBox="0 0 5 3"><path d="M0 0 H5 L2.5 2.8 Z" fill="#555"/></svg>
<div class="t" id="t58" style="transform:scaleX(0.9057);left:885.90px;top:149.89px;font-size:9.20px;line-height:11.04px;color:#444;">Редактирование</div>
<div class="abs" style="left:957.50px;top:97.00px;width:1.00px;height:61.00px;background:#d8d8d8;"></div>
<svg class="abs" style="left:1005.00px;top:153.50px;" width="9" height="6" viewBox="0 0 9 6"><path d="M.8 5 L4.4 1.2 L8 5" fill="none" stroke="#555" stroke-width="1"/></svg>
<!--SLIDE-->
<div class="abs" style="left:354.80px;top:170.00px;width:477.20px;height:357.40px;background:linear-gradient(112deg,#ffffff 0%,#fffffb 28%,#fefdec 58%,#fcf9d4 100%);box-shadow:0 0 1.5px rgba(0,0,0,.45)"></div>
<div class="abs" style="left:367.00px;top:176.00px;width:98.00px;height:56.80px;background:#164b9d;"></div>
<svg class="abs" style="left:367.00px;top:176.00px;" width="98" height="56.8" viewBox="0 0 98 56.8"><g fill="#e9e46c"><g transform="translate(70.70 28.60) scale(1.15 1)"><polygon points="0.00,-3.30 0.81,-1.12 3.14,-1.02 1.32,0.43 1.94,2.67 0.00,1.39 -1.94,2.67 -1.32,0.43 -3.14,-1.02 -0.81,-1.12"/></g><g transform="translate(67.81 37.95) scale(1.15 1)"><polygon points="0.00,-3.30 0.81,-1.12 3.14,-1.02 1.32,0.43 1.94,2.67 0.00,1.39 -1.94,2.67 -1.32,0.43 -3.14,-1.02 -0.81,-1.12"/></g><g transform="translate(59.90 44.79) scale(1.15 1)"><polygon points="0.00,-3.30 0.81,-1.12 3.14,-1.02 1.32,0.43 1.94,2.67 0.00,1.39 -1.94,2.67 -1.32,0.43 -3.14,-1.02 -0.81,-1.12"/></g><g transform="translate(49.10 47.30) scale(1.15 1)"><polygon points="0.00,-3.30 0.81,-1.12 3.14,-1.02 1.32,0.43 1.94,2.67 0.00,1.39 -1.94,2.67 -1.32,0.43 -3.14,-1.02 -0.81,-1.12"/></g><g transform="translate(38.30 44.79) scale(1.15 1)"><polygon points="0.00,-3.30 0.81,-1.12 3.14,-1.02 1.32,0.43 1.94,2.67 0.00,1.39 -1.94,2.67 -1.32,0.43 -3.14,-1.02 -0.81,-1.12"/></g><g transform="translate(30.39 37.95) scale(1.15 1)"><polygon points="0.00,-3.30 0.81,-1.12 3.14,-1.02 1.32,0.43 1.94,2.67 0.00,1.39 -1.94,2.67 -1.32,0.43 -3.14,-1.02 -0.81,-1.12"/></g><g transform="translate(27.50 28.60) scale(1.15 1)"><polygon points="0.00,-3.30 0.81,-1.12 3.14,-1.02 1.32,0.43 1.94,2.67 0.00,1.39 -1.94,2.67 -1.32,0.43 -3.14,-1.02 -0.81,-1.12"/></g><g transform="translate(30.39 19.25) scale(1.15 1)"><polygon points="0.00,-3.30 0.81,-1.12 3.14,-1.02 1.32,0.43 1.94,2.67 0.00,1.39 -1.94,2.67 -1.32,0.43 -3.14,-1.02 -0.81,-1.12"/></g><g transform="translate(38.30 12.41) scale(1.15 1)"><polygon points="0.00,-3.30 0.81,-1.12 3.14,-1.02 1.32,0.43 1.94,2.67 0.00,1.39 -1.94,2.67 -1.32,0.43 -3.14,-1.02 -0.81,-1.12"/></g><g transform="translate(49.10 9.90) scale(1.15 1)"><polygon points="0.00,-3.30 0.81,-1.12 3.14,-1.02 1.32,0.43 1.94,2.67 0.00,1.39 -1.94,2.67 -1.32,0.43 -3.14,-1.02 -0.81,-1.12"/></g><g transform="translate(59.90 12.41) scale(1.15 1)"><polygon points="0.00,-3.30 0.81,-1.12 3.14,-1.02 1.32,0.43 1.94,2.67 0.00,1.39 -1.94,2.67 -1.32,0.43 -3.14,-1.02 -0.81,-1.12"/></g><g transform="translate(67.81 19.25) scale(1.15 1)"><polygon points="0.00,-3.30 0.81,-1.12 3.14,-1.02 1.32,0.43 1.94,2.67 0.00,1.39 -1.94,2.67 -1.32,0.43 -3.14,-1.02 -0.81,-1.12"/></g></g></svg>
<div class="t" id="t59" style="transform:scaleX(1.1834);left:377.50px;top:240.42px;font-size:9.80px;line-height:11.76px;color:#2e4a7e;font-weight:700;">Co-funded by</div>
<div class="t" id="t60" style="transform:scaleX(1.1861);left:361.30px;top:253.02px;font-size:9.80px;line-height:11.76px;color:#2e4a7e;font-weight:700;">the European Union</div>
<div class="abs" style="left:383.20px;top:277.50px;width:63.80px;height:64.00px;background:#1f2b66;"></div>
<svg class="abs" style="left:383.20px;top:277.50px;" width="63.8" height="64" viewBox="0 0 63.8 64"><rect x="1.2" y="1.2" width="61.4" height="61.6" fill="none" stroke="#3a4782" stroke-width=".5"/>
<g fill="none" stroke="#dccb94">
<path d="M29 41 C17 38 11 27 15.4 11" stroke-width="7.4" stroke-dasharray="2.2 1.1"/>
<path d="M35 41 C47 38 53 27 48.6 11" stroke-width="7.4" stroke-dasharray="2.2 1.1"/>
<path d="M22 8.4 C27 5.6 37 5.6 42 8.4" stroke-width="3.4" stroke-dasharray="1.6 1"/>
</g>
<path d="M24 12.4 H41 V27 C41 32 35 33 32.5 35.6 C30 33 24 32 24 27 Z" fill="#1f2b66" stroke="#cdb878" stroke-width=".7"/>
<path d="M13 39 C19 42.6 25 42 32 44.4 C39 42 45 42.6 51 39 L52 45.6 C45 47.6 39 47 32 50 C25 47 19 47.6 12 45.6 Z" fill="#f4f1e6"/>
<path d="M23 47.4 C29 49.6 35 49.6 41 47.4 L40 52 C35 53.4 29 53.4 24 52 Z" fill="#fbfaf2"/>
<path d="M29 36 L32.5 41 L36 36" fill="none" stroke="#e9dcae" stroke-width="1.4"/></svg>
<div class="t" id="t61" style="transform:scaleX(0.8811);left:410.40px;top:290.31px;font-size:17.00px;line-height:20.40px;color:#e3d08f;font-weight:700;font-family:'Liberation Serif','DejaVu Serif',serif;">У</div>
<div class="t" id="t62" style="transform:scaleX(0.8186);left:395.60px;top:331.01px;font-size:2.10px;line-height:2.52px;color:#b9bdd6;font-weight:700;">ХАРКІВСЬКИЙ НАЦІОНАЛЬНИЙ УНІВЕРСИТЕТ</div>
<div class="t" id="t63" style="transform:scaleX(0.9630);left:404.40px;top:334.61px;font-size:2.10px;line-height:2.52px;color:#b9bdd6;font-weight:700;">ІМЕНІ В. Н. КАРАЗІНА</div>
<svg class="abs" style="left:384.00px;top:350.00px;" width="66" height="68" viewBox="0 0 66 68"><defs><path id="arcu" d="M 14.8 52.4 A 25.8 25.8 0 1 1 47.4 54.5"/></defs>
<text font-size="7.6" fill="#9a4334" font-family="Liberation Serif,DejaVu Serif,serif" font-weight="700"><textPath href="#arcu" textLength="125" lengthAdjust="spacingAndGlyphs">Українська інженерно-педагогічна академія</textPath></text>
<g fill="#e9e5e1" stroke="#aea7a2" stroke-width=".5">
<rect x="9.4" y="24.6" width="44" height="26.6"/>
<rect x="14" y="17" width="35" height="34.2"/>
</g>
<g fill="none" stroke="#9f9893" stroke-width=".55">
<path d="M12.6 17 H50.4 M9.4 29.6 H53.4 M14 36 H49 M9.4 42.6 H53.4 M9.4 51.2 H53.4"/>
<path d="M17.6 19 V29 M21.6 19 V29 M25.6 19 V29 M29.6 19 V29 M33.6 19 V29 M37.6 19 V29 M41.6 19 V29 M45.6 19 V29"/>
<path d="M16.6 30.6 V42 M20.4 30.6 V42 M24.6 30.6 V42 M28.4 30.6 V42 M32.6 30.6 V42 M36.4 30.6 V42 M40.6 30.6 V42 M44.4 30.6 V42 M47.6 30.6 V42"/>
<path d="M11.6 44 V50.6 M15.6 44 V50.6 M19.6 44 V50.6 M23.6 44 V50.6 M27.6 44 V50.6 M31.6 44 V50.6 M35.6 44 V50.6 M39.6 44 V50.6 M43.6 44 V50.6 M47.6 44 V50.6 M51.4 44 V50.6"/>
</g>
<g fill="#d9d4cf"><rect x="17.6" y="31.6" width="3.4" height="9.6" rx="1.6"/><rect x="25.6" y="31.6" width="3.4" height="9.6" rx="1.6"/><rect x="33.6" y="31.6" width="3.4" height="9.6" rx="1.6"/><rect x="41.6" y="31.6" width="3.4" height="9.6" rx="1.6"/></g></svg>
<div class="t" id="t64" style="transform:scaleX(1.0798);left:409.20px;top:403.00px;font-size:3.80px;line-height:4.56px;color:#9a4334;font-weight:700;font-family:'Liberation Serif','DejaVu Serif',serif;">1958</div>
<div class="t" id="t65" style="transform:scaleX(1.0865);left:399.80px;top:406.37px;font-size:10.60px;line-height:12.72px;color:#9a4334;font-weight:700;font-family:'Liberation Serif','DejaVu Serif',serif;">УІПА</div>
<svg class="abs" style="left:379.20px;top:431.30px;" width="67.2" height="66.4" viewBox="0 0 67.2 66.4"><circle cx="33.6" cy="33.2" r="32.4" fill="#fdfdfd" stroke="#2a2c78" stroke-width="2"/>
<circle cx="33.6" cy="33.2" r="29.6" fill="none" stroke="#e4e6f2" stroke-width=".6"/>
<g fill="#dfe6f2"><circle cx="12" cy="20" r="2"/><circle cx="22" cy="14" r="1.6"/><circle cx="46" cy="14" r="1.8"/><circle cx="56" cy="22" r="2"/><circle cx="60" cy="34" r="1.6"/></g>




<rect x="20" y="42.8" width="40.6" height="1.4" fill="#efd96a"/>
<path d="M49.4 20.4 L56.6 17.4 L63.6 20.6 L56.6 23.4 Z" fill="#6d6a52"/></svg>
<div class="t" id="t66" style="transform:scaleX(1.1095);left:385.40px;top:450.83px;font-size:23.00px;line-height:27.60px;color:#272c78;font-weight:700;">МТП</div>
<svg class="abs" style="left:379.20px;top:431.30px;" width="67.2" height="66.4" viewBox="0 0 67.2 66.4"><path d="M6.2 41.2 L12.6 25.4 L15.4 31.4 L11.4 41.2 Z" fill="#4d52d6"/><path d="M19.2 37.4 L25.2 23 L23 22 L28.8 15.8 L29.8 24.4 L27.6 23.6 L21.8 39.6 Z" fill="#262a70" stroke="#fdfdfd" stroke-width=".5"/></svg>
<div class="t" id="t67" style="transform:scaleX(1.1362);left:396.00px;top:440.57px;font-size:3.20px;line-height:3.84px;color:#2a2c78;font-weight:700;">ЗАСНОВАНО 1958</div>
<div class="t" id="t68" style="transform:scaleX(1.1838);left:393.00px;top:478.46px;font-size:2.90px;line-height:3.48px;color:#2e3fa8;font-weight:700;">КАФЕДРА МАРКЕТИНГУ</div>
<div class="t" id="t69" style="transform:scaleX(1.1475);left:395.40px;top:482.26px;font-size:2.90px;line-height:3.48px;color:#2e3fa8;font-weight:700;">ТА ТОРГОВЕЛЬНОГО</div>
<div class="t" id="t70" style="transform:scaleX(1.2045);left:396.40px;top:486.06px;font-size:2.90px;line-height:3.48px;color:#2e3fa8;font-weight:700;">ПІДПРИЄМНИЦТВА</div>
<div class="t" id="t71" style="transform:scaleX(1.7402);left:408.00px;top:491.73px;font-size:2.40px;line-height:2.88px;color:#7a7fa8;">МТП</div>
<div class="t" id="t72" style="transform:scaleX(0.8824);left:508.40px;top:181.13px;font-size:10.00px;line-height:12.00px;color:#27386a;font-weight:700;">НАЦІОНАЛЬНИЙ ТЕХНІЧНИЙ УНІВЕРСИТЕТ УКРАЇНИ «КИЇВСЬКИЙ</div>
<div class="t" id="t73" style="transform:scaleX(0.8740);left:531.80px;top:192.34px;font-size:10.00px;line-height:12.00px;color:#27386a;font-weight:700;">ПОЛІТЕХНІЧНИЙ ІНСТИТУТ ІМЕНІ ІГОРЯ СІКОРСЬКОГО»</div>
<div class="t" id="t74" style="transform:scaleX(0.9129);left:516.60px;top:204.95px;font-size:8.50px;line-height:10.20px;color:#27386a;font-weight:700;">ФАКУЛЬТЕТ МЕНЕДЖМЕНТУ ТА МАРКЕТИНГУ КАФЕДРА ЕКОНОМІЧНОЇ</div>
<div class="t" id="t75" style="transform:scaleX(0.9039);left:626.00px;top:216.75px;font-size:8.50px;line-height:10.20px;color:#27386a;font-weight:700;">КІБЕРНЕТИКИ</div>
<div class="t" id="t76" style="transform:scaleX(0.9635);left:494.30px;top:256.83px;font-size:9.90px;line-height:11.88px;color:#2a4584;">XIX Міжнародна науково-практична конференція «МОДЕЛЮВАННЯ ТА</div>
<div class="t" id="t77" style="transform:scaleX(0.9039);left:552.20px;top:269.03px;font-size:9.90px;line-height:11.88px;color:#2a4584;">ПРОГНОЗУВАННЯ ЕКОНОМІЧНИХ ПРОЦЕСІВ»</div>
<div class="t" id="t78" style="transform:scaleX(1.0587);left:510.90px;top:311.79px;font-size:11.00px;line-height:13.20px;color:#1d3a80;font-weight:700;">«Досвід реалізації грантових проєктів економіко-</div>
<div class="t" id="t79" style="transform:scaleX(1.0439);left:583.30px;top:327.39px;font-size:11.00px;line-height:13.20px;color:#1d3a80;font-weight:700;">управлінського напряму</div>
<div class="t" id="t80" style="transform:scaleX(1.0627);left:503.40px;top:343.19px;font-size:11.00px;line-height:13.20px;color:#1d3a80;font-weight:700;">в ННІ «Українська інженерно-педагогічна академія»</div>
<div class="t" id="t81" style="transform:scaleX(1.0372);left:535.00px;top:359.09px;font-size:11.00px;line-height:13.20px;color:#1d3a80;font-weight:700;">Харківського національного університету</div>
<div class="t" id="t82" style="transform:scaleX(1.0602);left:595.00px;top:374.59px;font-size:11.00px;line-height:13.20px;color:#1d3a80;font-weight:700;">імені В.Н. Каразіна»</div>
<div class="t" id="t83" style="transform:scaleX(1.0174);left:522.70px;top:418.05px;font-size:8.40px;line-height:10.08px;color:#2c4a90;">Завідувач кафедри маркетингу та торговельного підприємництва,</div>
<div class="t" id="t84" style="transform:scaleX(0.9737);left:593.00px;top:429.75px;font-size:8.40px;line-height:10.08px;color:#27386a;text-decoration:underline wavy #d0504a .6px;text-underline-offset:1px;">д.е.н.</div>
<div class="t" id="t85" style="transform:scaleX(0.9860);left:613.60px;top:429.75px;font-size:8.40px;line-height:10.08px;color:#27386a;">, проф.&nbsp; ЧОБІТОК Вікторія</div>
<div class="t" id="t86" style="transform:scaleX(0.9688);left:615.80px;top:496.07px;font-size:8.80px;line-height:10.56px;color:#27386a;">4 грудня 2025 року</div>
<!--/SLIDE-->
<svg class="abs" style="left:427.50px;top:451.50px;" width="10" height="16" viewBox="0 0 10 16"><path d="M.8 .8 V12.6 L3.6 10 L5.6 14.6 L7.4 13.8 L5.4 9.4 H9.2 Z" fill="#fff" stroke="#111" stroke-width=".9" stroke-linejoin="round"/></svg>
<div class="abs" style="left:161.50px;top:161.50px;width:13.00px;height:402.00px;background:#ececec;"></div>
<div class="abs" style="left:176.60px;top:161.50px;width:1.00px;height:402.00px;background:#f6f6f6;"></div>
<div class="abs" style="left:162.40px;top:163.40px;width:10.80px;height:10.40px;background:#fff;border:1px solid #c9c9c9"></div>
<svg class="abs" style="left:164.80px;top:166.60px;" width="6" height="4" viewBox="0 0 6 4"><path d="M0 3.6 L3 .4 L6 3.6 Z" fill="#555"/></svg>
<div class="abs" style="left:162.40px;top:173.60px;width:10.80px;height:42.00px;background:#fff;border:1px solid #c9c9c9"></div>
<div class="abs" style="left:162.40px;top:551.60px;width:10.80px;height:10.40px;background:#fff;border:1px solid #c9c9c9"></div>
<svg class="abs" style="left:164.80px;top:555.00px;" width="6" height="4" viewBox="0 0 6 4"><path d="M0 .4 L3 3.6 L6 .4 Z" fill="#555"/></svg>
<div class="abs" style="left:19px;top:161.5px;width:142px;height:402px;overflow:hidden">
<div class="abs" style="left:-19px;top:-161.5px;width:1px;height:1px">
<div class="abs" style="left:42.40px;top:173.20px;width:108.00px;height:82.00px;background:#e2694e;"></div>
<div class="abs" style="left:44.40px;top:175.00px;width:104.20px;height:78.30px;background:#fffef4;"></div>
<div class="abs" style="left:0;top:0;width:1307px;height:665px;transform-origin:0 0;transform:translate(-33.073px,137.879px) scale(0.21836)">
<div class="abs" style="left:354.80px;top:170.00px;width:477.20px;height:357.40px;background:linear-gradient(112deg,#ffffff 0%,#fffffb 28%,#fefdec 58%,#fcf9d4 100%);box-shadow:0 0 1.5px rgba(0,0,0,.45)"></div>
<div class="abs" style="left:367.00px;top:176.00px;width:98.00px;height:56.80px;background:#164b9d;"></div>
<svg class="abs" style="left:367.00px;top:176.00px;" width="98" height="56.8" viewBox="0 0 98 56.8"><g fill="#e9e46c"><g transform="translate(70.70 28.60) scale(1.15 1)"><polygon points="0.00,-3.30 0.81,-1.12 3.14,-1.02 1.32,0.43 1.94,2.67 0.00,1.39 -1.94,2.67 -1.32,0.43 -3.14,-1.02 -0.81,-1.12"/></g><g transform="translate(67.81 37.95) scale(1.15 1)"><polygon points="0.00,-3.30 0.81,-1.12 3.14,-1.02 1.32,0.43 1.94,2.67 0.00,1.39 -1.94,2.67 -1.32,0.43 -3.14,-1.02 -0.81,-1.12"/></g><g transform="translate(59.90 44.79) scale(1.15 1)"><polygon points="0.00,-3.30 0.81,-1.12 3.14,-1.02 1.32,0.43 1.94,2.67 0.00,1.39 -1.94,2.67 -1.32,0.43 -3.14,-1.02 -0.81,-1.12"/></g><g transform="translate(49.10 47.30) scale(1.15 1)"><polygon points="0.00,-3.30 0.81,-1.12 3.14,-1.02 1.32,0.43 1.94,2.67 0.00,1.39 -1.94,2.67 -1.32,0.43 -3.14,-1.02 -0.81,-1.12"/></g><g transform="translate(38.30 44.79) scale(1.15 1)"><polygon points="0.00,-3.30 0.81,-1.12 3.14,-1.02 1.32,0.43 1.94,2.67 0.00,1.39 -1.94,2.67 -1.32,0.43 -3.14,-1.02 -0.81,-1.12"/></g><g transform="translate(30.39 37.95) scale(1.15 1)"><polygon points="0.00,-3.30 0.81,-1.12 3.14,-1.02 1.32,0.43 1.94,2.67 0.00,1.39 -1.94,2.67 -1.32,0.43 -3.14,-1.02 -0.81,-1.12"/></g><g transform="translate(27.50 28.60) scale(1.15 1)"><polygon points="0.00,-3.30 0.81,-1.12 3.14,-1.02 1.32,0.43 1.94,2.67 0.00,1.39 -1.94,2.67 -1.32,0.43 -3.14,-1.02 -0.81,-1.12"/></g><g transform="translate(30.39 19.25) scale(1.15 1)"><polygon points="0.00,-3.30 0.81,-1.12 3.14,-1.02 1.32,0.43 1.94,2.67 0.00,1.39 -1.94,2.67 -1.32,0.43 -3.14,-1.02 -0.81,-1.12"/></g><g transform="translate(38.30 12.41) scale(1.15 1)"><polygon points="0.00,-3.30 0.81,-1.12 3.14,-1.02 1.32,0.43 1.94,2.67 0.00,1.39 -1.94,2.67 -1.32,0.43 -3.14,-1.02 -0.81,-1.12"/></g><g transform="translate(49.10 9.90) scale(1.15 1)"><polygon points="0.00,-3.30 0.81,-1.12 3.14,-1.02 1.32,0.43 1.94,2.67 0.00,1.39 -1.94,2.67 -1.32,0.43 -3.14,-1.02 -0.81,-1.12"/></g><g transform="translate(59.90 12.41) scale(1.15 1)"><polygon points="0.00,-3.30 0.81,-1.12 3.14,-1.02 1.32,0.43 1.94,2.67 0.00,1.39 -1.94,2.67 -1.32,0.43 -3.14,-1.02 -0.81,-1.12"/></g><g transform="translate(67.81 19.25) scale(1.15 1)"><polygon points="0.00,-3.30 0.81,-1.12 3.14,-1.02 1.32,0.43 1.94,2.67 0.00,1.39 -1.94,2.67 -1.32,0.43 -3.14,-1.02 -0.81,-1.12"/></g></g></svg>
<div class="t" id="c59" style="transform:scaleX(1.1834);left:377.50px;top:240.42px;font-size:9.80px;line-height:11.76px;color:#2e4a7e;font-weight:700;">Co-funded by</div>
<div class="t" id="c60" style="transform:scaleX(1.1861);left:361.30px;top:253.02px;font-size:9.80px;line-height:11.76px;color:#2e4a7e;font-weight:700;">the European Union</div>
<div class="abs" style="left:383.20px;top:277.50px;width:63.80px;height:64.00px;background:#1f2b66;"></div>
<svg class="abs" style="left:383.20px;top:277.50px;" width="63.8" height="64" viewBox="0 0 63.8 64"><rect x="1.2" y="1.2" width="61.4" height="61.6" fill="none" stroke="#3a4782" stroke-width=".5"/>
<g fill="none" stroke="#dccb94">
<path d="M29 41 C17 38 11 27 15.4 11" stroke-width="7.4" stroke-dasharray="2.2 1.1"/>
<path d="M35 41 C47 38 53 27 48.6 11" stroke-width="7.4" stroke-dasharray="2.2 1.1"/>
<path d="M22 8.4 C27 5.6 37 5.6 42 8.4" stroke-width="3.4" stroke-dasharray="1.6 1"/>
</g>
<path d="M24 12.4 H41 V27 C41 32 35 33 32.5 35.6 C30 33 24 32 24 27 Z" fill="#1f2b66" stroke="#cdb878" stroke-width=".7"/>
<path d="M13 39 C19 42.6 25 42 32 44.4 C39 42 45 42.6 51 39 L52 45.6 C45 47.6 39 47 32 50 C25 47 19 47.6 12 45.6 Z" fill="#f4f1e6"/>
<path d="M23 47.4 C29 49.6 35 49.6 41 47.4 L40 52 C35 53.4 29 53.4 24 52 Z" fill="#fbfaf2"/>
<path d="M29 36 L32.5 41 L36 36" fill="none" stroke="#e9dcae" stroke-width="1.4"/></svg>
<div class="t" id="c61" style="transform:scaleX(0.8811);left:410.40px;top:290.31px;font-size:17.00px;line-height:20.40px;color:#e3d08f;font-weight:700;font-family:'Liberation Serif','DejaVu Serif',serif;">У</div>
<div class="t" id="c62" style="transform:scaleX(0.8186);left:395.60px;top:331.01px;font-size:2.10px;line-height:2.52px;color:#b9bdd6;font-weight:700;">ХАРКІВСЬКИЙ НАЦІОНАЛЬНИЙ УНІВЕРСИТЕТ</div>
<div class="t" id="c63" style="transform:scaleX(0.9630);left:404.40px;top:334.61px;font-size:2.10px;line-height:2.52px;color:#b9bdd6;font-weight:700;">ІМЕНІ В. Н. КАРАЗІНА</div>
<svg class="abs" style="left:384.00px;top:350.00px;" width="66" height="68" viewBox="0 0 66 68"><defs><path id="arcv" d="M 14.8 52.4 A 25.8 25.8 0 1 1 47.4 54.5"/></defs>
<text font-size="7.6" fill="#9a4334" font-family="Liberation Serif,DejaVu Serif,serif" font-weight="700"><textPath href="#arcv" textLength="125" lengthAdjust="spacingAndGlyphs">Українська інженерно-педагогічна академія</textPath></text>
<g fill="#e9e5e1" stroke="#aea7a2" stroke-width=".5">
<rect x="9.4" y="24.6" width="44" height="26.6"/>
<rect x="14" y="17" width="35" height="34.2"/>
</g>
<g fill="none" stroke="#9f9893" stroke-width=".55">
<path d="M12.6 17 H50.4 M9.4 29.6 H53.4 M14 36 H49 M9.4 42.6 H53.4 M9.4 51.2 H53.4"/>
<path d="M17.6 19 V29 M21.6 19 V29 M25.6 19 V29 M29.6 19 V29 M33.6 19 V29 M37.6 19 V29 M41.6 19 V29 M45.6 19 V29"/>
<path d="M16.6 30.6 V42 M20.4 30.6 V42 M24.6 30.6 V42 M28.4 30.6 V42 M32.6 30.6 V42 M36.4 30.6 V42 M40.6 30.6 V42 M44.4 30.6 V42 M47.6 30.6 V42"/>
<path d="M11.6 44 V50.6 M15.6 44 V50.6 M19.6 44 V50.6 M23.6 44 V50.6 M27.6 44 V50.6 M31.6 44 V50.6 M35.6 44 V50.6 M39.6 44 V50.6 M43.6 44 V50.6 M47.6 44 V50.6 M51.4 44 V50.6"/>
</g>
<g fill="#d9d4cf"><rect x="17.6" y="31.6" width="3.4" height="9.6" rx="1.6"/><rect x="25.6" y="31.6" width="3.4" height="9.6" rx="1.6"/><rect x="33.6" y="31.6" width="3.4" height="9.6" rx="1.6"/><rect x="41.6" y="31.6" width="3.4" height="9.6" rx="1.6"/></g></svg>
<div class="t" id="c64" style="transform:scaleX(1.0798);left:409.20px;top:403.00px;font-size:3.80px;line-height:4.56px;color:#9a4334;font-weight:700;font-family:'Liberation Serif','DejaVu Serif',serif;">1958</div>
<div class="t" id="c65" style="transform:scaleX(1.0865);left:399.80px;top:406.37px;font-size:10.60px;line-height:12.72px;color:#9a4334;font-weight:700;font-family:'Liberation Serif','DejaVu Serif',serif;">УІПА</div>
<svg class="abs" style="left:379.20px;top:431.30px;" width="67.2" height="66.4" viewBox="0 0 67.2 66.4"><circle cx="33.6" cy="33.2" r="32.4" fill="#fdfdfd" stroke="#2a2c78" stroke-width="2"/>
<circle cx="33.6" cy="33.2" r="29.6" fill="none" stroke="#e4e6f2" stroke-width=".6"/>
<g fill="#dfe6f2"><circle cx="12" cy="20" r="2"/><circle cx="22" cy="14" r="1.6"/><circle cx="46" cy="14" r="1.8"/><circle cx="56" cy="22" r="2"/><circle cx="60" cy="34" r="1.6"/></g>




<rect x="20" y="42.8" width="40.6" height="1.4" fill="#efd96a"/>
<path d="M49.4 20.4 L56.6 17.4 L63.6 20.6 L56.6 23.4 Z" fill="#6d6a52"/></svg>
<div class="t" id="c66" style="transform:scaleX(1.1095);left:385.40px;top:450.83px;font-size:23.00px;line-height:27.60px;color:#272c78;font-weight:700;">МТП</div>
<svg class="abs" style="left:379.20px;top:431.30px;" width="67.2" height="66.4" viewBox="0 0 67.2 66.4"><path d="M6.2 41.2 L12.6 25.4 L15.4 31.4 L11.4 41.2 Z" fill="#4d52d6"/><path d="M19.2 37.4 L25.2 23 L23 22 L28.8 15.8 L29.8 24.4 L27.6 23.6 L21.8 39.6 Z" fill="#262a70" stroke="#fdfdfd" stroke-width=".5"/></svg>
<div class="t" id="c67" style="transform:scaleX(1.1362);left:396.00px;top:440.57px;font-size:3.20px;line-height:3.84px;color:#2a2c78;font-weight:700;">ЗАСНОВАНО 1958</div>
<div class="t" id="c68" style="transform:scaleX(1.1838);left:393.00px;top:478.46px;font-size:2.90px;line-height:3.48px;color:#2e3fa8;font-weight:700;">КАФЕДРА МАРКЕТИНГУ</div>
<div class="t" id="c69" style="transform:scaleX(1.1475);left:395.40px;top:482.26px;font-size:2.90px;line-height:3.48px;color:#2e3fa8;font-weight:700;">ТА ТОРГОВЕЛЬНОГО</div>
<div class="t" id="c70" style="transform:scaleX(1.2045);left:396.40px;top:486.06px;font-size:2.90px;line-height:3.48px;color:#2e3fa8;font-weight:700;">ПІДПРИЄМНИЦТВА</div>
<div class="t" id="c71" style="transform:scaleX(1.7402);left:408.00px;top:491.73px;font-size:2.40px;line-height:2.88px;color:#7a7fa8;">МТП</div>
<div class="t" id="c72" style="transform:scaleX(0.8824);left:508.40px;top:181.13px;font-size:10.00px;line-height:12.00px;color:#27386a;font-weight:700;">НАЦІОНАЛЬНИЙ ТЕХНІЧНИЙ УНІВЕРСИТЕТ УКРАЇНИ «КИЇВСЬКИЙ</div>
<div class="t" id="c73" style="transform:scaleX(0.8740);left:531.80px;top:192.34px;font-size:10.00px;line-height:12.00px;color:#27386a;font-weight:700;">ПОЛІТЕХНІЧНИЙ ІНСТИТУТ ІМЕНІ ІГОРЯ СІКОРСЬКОГО»</div>
<div class="t" id="c74" style="transform:scaleX(0.9129);left:516.60px;top:204.95px;font-size:8.50px;line-height:10.20px;color:#27386a;font-weight:700;">ФАКУЛЬТЕТ МЕНЕДЖМЕНТУ ТА МАРКЕТИНГУ КАФЕДРА ЕКОНОМІЧНОЇ</div>
<div class="t" id="c75" style="transform:scaleX(0.9039);left:626.00px;top:216.75px;font-size:8.50px;line-height:10.20px;color:#27386a;font-weight:700;">КІБЕРНЕТИКИ</div>
<div class="t" id="c76" style="transform:scaleX(0.9635);left:494.30px;top:256.83px;font-size:9.90px;line-height:11.88px;color:#2a4584;">XIX Міжнародна науково-практична конференція «МОДЕЛЮВАННЯ ТА</div>
<div class="t" id="c77" style="transform:scaleX(0.9039);left:552.20px;top:269.03px;font-size:9.90px;line-height:11.88px;color:#2a4584;">ПРОГНОЗУВАННЯ ЕКОНОМІЧНИХ ПРОЦЕСІВ»</div>
<div class="t" id="c78" style="transform:scaleX(1.0587);left:510.90px;top:311.79px;font-size:11.00px;line-height:13.20px;color:#1d3a80;font-weight:700;">«Досвід реалізації грантових проєктів економіко-</div>
<div class="t" id="c79" style="transform:scaleX(1.0439);left:583.30px;top:327.39px;font-size:11.00px;line-height:13.20px;color:#1d3a80;font-weight:700;">управлінського напряму</div>
<div class="t" id="c80" style="transform:scaleX(1.0627);left:503.40px;top:343.19px;font-size:11.00px;line-height:13.20px;color:#1d3a80;font-weight:700;">в ННІ «Українська інженерно-педагогічна академія»</div>
<div class="t" id="c81" style="transform:scaleX(1.0372);left:535.00px;top:359.09px;font-size:11.00px;line-height:13.20px;color:#1d3a80;font-weight:700;">Харківського національного університету</div>
<div class="t" id="c82" style="transform:scaleX(1.0602);left:595.00px;top:374.59px;font-size:11.00px;line-height:13.20px;color:#1d3a80;font-weight:700;">імені В.Н. Каразіна»</div>
<div class="t" id="c83" style="transform:scaleX(1.0174);left:522.70px;top:418.05px;font-size:8.40px;line-height:10.08px;color:#2c4a90;">Завідувач кафедри маркетингу та торговельного підприємництва,</div>
<div class="t" id="c84" style="transform:scaleX(0.9737);left:593.00px;top:429.75px;font-size:8.40px;line-height:10.08px;color:#27386a;text-decoration:underline wavy #d0504a .6px;text-underline-offset:1px;">д.е.н.</div>
<div class="t" id="c85" style="transform:scaleX(0.9860);left:613.60px;top:429.75px;font-size:8.40px;line-height:10.08px;color:#27386a;">, проф.&nbsp; ЧОБІТОК Вікторія</div>
<div class="t" id="c86" style="transform:scaleX(0.9688);left:615.80px;top:496.07px;font-size:8.80px;line-height:10.56px;color:#27386a;">4 грудня 2025 року</div>
</div>
<div class="t" id="t87" style="left:27.40px;top:174.76px;font-size:10.40px;line-height:12.48px;color:#d0502f;">1</div>
<div class="abs" style="left:44.40px;top:267.50px;width:104.20px;height:78.30px;background:linear-gradient(112deg,#ffffff 0%,#fffffb 28%,#fefdec 58%,#fcf9d4 100%);box-shadow:0 0 1px rgba(0,0,0,.35)"></div>
<div class="abs" style="left:48.00px;top:270.50px;width:21.40px;height:11.60px;background:#164b9d;"></div>
<svg class="abs" style="left:48.00px;top:270.50px;" width="21.4" height="11.6" viewBox="0 0 21.4 11.6"><circle cx="10.7" cy="5.8" r="3.6" fill="none" stroke="#d9d873" stroke-width=".8" stroke-dasharray=".9 1"/></svg>
<div class="abs" style="left:49.40px;top:283.50px;width:18.60px;height:1.00px;background:#7f8fb2;"></div>
<div class="abs" style="left:47.80px;top:285.70px;width:21.80px;height:1.00px;background:#7f8fb2;"></div>
<div class="abs" style="left:51.00px;top:291.90px;width:13.80px;height:13.60px;background:#1f2b66;"></div>
<svg class="abs" style="left:51.00px;top:291.90px;" width="13.8" height="13.6" viewBox="0 0 13.8 13.6"><circle cx="6.9" cy="5.8" r="3.4" fill="none" stroke="#cdbb86" stroke-width="1.3"/><rect x="3.6" y="9" width="6.6" height="1.6" fill="#e8e4d6"/></svg>
<svg class="abs" style="left:50.40px;top:307.50px;" width="16" height="16" viewBox="0 0 16 16"><circle cx="8" cy="8" r="6.9" fill="#f6f0ea" stroke="#cdb1a8" stroke-width=".8"/><rect x="4.6" y="5.4" width="6.8" height="5" fill="#d8d0ca"/></svg>
<svg class="abs" style="left:50.40px;top:324.50px;" width="16" height="16" viewBox="0 0 16 16"><circle cx="8" cy="8" r="7" fill="#fff" stroke="#2a2c78" stroke-width="1.1"/><text x="2.2" y="10.4" font-size="6.2" font-weight="700" fill="#2b3190" textLength="11.6" lengthAdjust="spacingAndGlyphs">МТП</text></svg>
<svg class="abs" style="left:74.70px;top:271.80px" width="21.00" height="18.80" viewBox="0 0 22 18" preserveAspectRatio="none"><rect width="22" height="18" fill="#a9b0a2"/><rect x="0" y="0" width="22" height="4" fill="#9eb6cf"/><rect x="6" y="3" width="10" height="13" fill="#c9cbbf"/><path d="M8 5 V15 M10.4 5 V15 M12.8 5 V15" stroke="#8d9286" stroke-width=".7"/><rect x="0" y="0" width="5.6" height="18" fill="#2f4a2c"/><rect x="16" y="2" width="6" height="16" fill="#3a5533"/><rect x="0" y="15.6" width="22" height="2.4" fill="#4a5244"/></svg>
<svg class="abs" style="left:117.80px;top:271.80px" width="22.40" height="18.80" viewBox="0 0 22 18" preserveAspectRatio="none"><rect width="22" height="18" fill="#4c6344"/><rect x="2" y="0" width="9" height="4" fill="#b8c6d6"/><path d="M7 18 L11 8 L15 8 L20 18 Z" fill="#7b7f77"/><rect x="0" y="0" width="3" height="18" fill="#2c4428"/><rect x="15" y="0" width="7" height="9" fill="#34502f"/></svg>
<svg class="abs" style="left:95.60px;top:277.10px" width="22.30" height="14.60" viewBox="0 0 22 18" preserveAspectRatio="none"><rect width="22" height="18" fill="#3f7fd9"/><rect x="0" y="0" width="22" height="6" fill="#2f6fd0"/><path d="M0 9 L8 6.4 L22 8.6 V18 H0 Z" fill="#d6a675"/><path d="M0 12 L22 11.4 M0 14.4 L22 14" stroke="#b17f52" stroke-width=".7"/><rect x="0" y="15.8" width="22" height="2.2" fill="#3a3026"/></svg>
<svg class="abs" style="left:74.70px;top:323.80px" width="22.00" height="16.60" viewBox="0 0 22 18" preserveAspectRatio="none"><rect width="22" height="18" fill="#a7bdd6"/><rect x="5" y="4" width="12" height="12" fill="#cfd2c8"/><path d="M7 6 V15 M9.6 6 V15 M12.2 6 V15 M14.8 6 V15" stroke="#8e9488" stroke-width=".7"/><rect x="0" y="2" width="5" height="16" fill="#3a5a30"/><rect x="17.4" y="4" width="4.6" height="14" fill="#46663a"/><rect x="0" y="15.8" width="22" height="2.2" fill="#55604a"/></svg>
<svg class="abs" style="left:117.60px;top:323.80px" width="22.80" height="16.60" viewBox="0 0 22 18" preserveAspectRatio="none"><rect width="22" height="18" fill="#7d9cc8"/><path d="M4 18 L9 3 L14 6 L18 2 L22 5 V18 Z" fill="#c5cbd0"/><path d="M9 3 L10 18 M14 6 L14 18 M18 2 L18.4 18" stroke="#90a0b2" stroke-width=".7"/><rect x="0" y="9" width="4" height="9" fill="#3d5836"/><rect x="0" y="16" width="22" height="2" fill="#5a6458"/></svg>
<svg class="abs" style="left:95.40px;top:325.50px" width="22.80" height="16.80" viewBox="0 0 22 18" preserveAspectRatio="none"><rect width="22" height="18" fill="#b9b6aa"/><rect x="0" y="0" width="22" height="3" fill="#a9a9a4"/><rect x="2" y="3" width="18" height="12" fill="#d9d1bd"/><path d="M4 5 H18 M4 8 H18 M4 11 H18" stroke="#9a917e" stroke-width=".8"/><path d="M5 4 V14 M8.6 4 V14 M12.2 4 V14 M15.8 4 V14" stroke="#a89f8a" stroke-width=".6"/><rect x="0" y="15" width="22" height="3" fill="#4a463c"/></svg>
<div class="abs" style="left:73.80px;top:295.10px;width:66.00px;height:0.90px;background:#8c93a8;opacity:.55"></div>
<div class="abs" style="left:72.80px;top:298.30px;width:68.00px;height:0.90px;background:#8c93a8;opacity:.55"></div>
<div class="abs" style="left:101.80px;top:301.50px;width:10.00px;height:0.90px;background:#8c93a8;opacity:.55"></div>
<div class="abs" style="left:71.80px;top:304.70px;width:70.00px;height:0.90px;background:#8c93a8;opacity:.55"></div>
<div class="abs" style="left:71.80px;top:307.90px;width:70.00px;height:0.90px;background:#8c93a8;opacity:.55"></div>
<div class="abs" style="left:73.80px;top:311.10px;width:66.00px;height:0.90px;background:#8c93a8;opacity:.55"></div>
<div class="abs" style="left:72.80px;top:314.30px;width:68.00px;height:0.90px;background:#8c93a8;opacity:.55"></div>
<div class="abs" style="left:74.80px;top:317.50px;width:64.00px;height:0.90px;background:#8c93a8;opacity:.55"></div>
<div class="t" id="t88" style="left:27.40px;top:267.26px;font-size:10.40px;line-height:12.48px;color:#666;">2</div>
<div class="abs" style="left:44.40px;top:360.00px;width:104.20px;height:78.30px;background:linear-gradient(112deg,#ffffff 0%,#fffffb 28%,#fefdec 58%,#fcf9d4 100%);box-shadow:0 0 1px rgba(0,0,0,.35)"></div>
<div class="abs" style="left:48.00px;top:363.00px;width:21.40px;height:11.60px;background:#164b9d;"></div>
<svg class="abs" style="left:48.00px;top:363.00px;" width="21.4" height="11.6" viewBox="0 0 21.4 11.6"><circle cx="10.7" cy="5.8" r="3.6" fill="none" stroke="#d9d873" stroke-width=".8" stroke-dasharray=".9 1"/></svg>
<div class="abs" style="left:49.40px;top:376.00px;width:18.60px;height:1.00px;background:#7f8fb2;"></div>
<div class="abs" style="left:47.80px;top:378.20px;width:21.80px;height:1.00px;background:#7f8fb2;"></div>
<div class="abs" style="left:51.00px;top:384.40px;width:13.80px;height:13.60px;background:#1f2b66;"></div>
<svg class="abs" style="left:51.00px;top:384.40px;" width="13.8" height="13.6" viewBox="0 0 13.8 13.6"><circle cx="6.9" cy="5.8" r="3.4" fill="none" stroke="#cdbb86" stroke-width="1.3"/><rect x="3.6" y="9" width="6.6" height="1.6" fill="#e8e4d6"/></svg>
<svg class="abs" style="left:50.40px;top:400.00px;" width="16" height="16" viewBox="0 0 16 16"><circle cx="8" cy="8" r="6.9" fill="#f6f0ea" stroke="#cdb1a8" stroke-width=".8"/><rect x="4.6" y="5.4" width="6.8" height="5" fill="#d8d0ca"/></svg>
<svg class="abs" style="left:50.40px;top:417.00px;" width="16" height="16" viewBox="0 0 16 16"><circle cx="8" cy="8" r="7" fill="#fff" stroke="#2a2c78" stroke-width="1.1"/><text x="2.2" y="10.4" font-size="6.2" font-weight="700" fill="#2b3190" textLength="11.6" lengthAdjust="spacingAndGlyphs">МТП</text></svg>
<svg class="abs" style="left:74.70px;top:364.30px" width="21.00" height="18.80" viewBox="0 0 22 18" preserveAspectRatio="none"><rect width="22" height="18" fill="#a9b0a2"/><rect x="0" y="0" width="22" height="4" fill="#9eb6cf"/><rect x="6" y="3" width="10" height="13" fill="#c9cbbf"/><path d="M8 5 V15 M10.4 5 V15 M12.8 5 V15" stroke="#8d9286" stroke-width=".7"/><rect x="0" y="0" width="5.6" height="18" fill="#2f4a2c"/><rect x="16" y="2" width="6" height="16" fill="#3a5533"/><rect x="0" y="15.6" width="22" height="2.4" fill="#4a5244"/></svg>
<svg class="abs" style="left:117.80px;top:364.30px" width="22.40" height="18.80" viewBox="0 0 22 18" preserveAspectRatio="none"><rect width="22" height="18" fill="#4c6344"/><rect x="2" y="0" width="9" height="4" fill="#b8c6d6"/><path d="M7 18 L11 8 L15 8 L20 18 Z" fill="#7b7f77"/><rect x="0" y="0" width="3" height="18" fill="#2c4428"/><rect x="15" y="0" width="7" height="9" fill="#34502f"/></svg>
<svg class="abs" style="left:95.60px;top:369.60px" width="22.30" height="14.60" viewBox="0 0 22 18" preserveAspectRatio="none"><rect width="22" height="18" fill="#3f7fd9"/><rect x="0" y="0" width="22" height="6" fill="#2f6fd0"/><path d="M0 9 L8 6.4 L22 8.6 V18 H0 Z" fill="#d6a675"/><path d="M0 12 L22 11.4 M0 14.4 L22 14" stroke="#b17f52" stroke-width=".7"/><rect x="0" y="15.8" width="22" height="2.2" fill="#3a3026"/></svg>
<svg class="abs" style="left:74.70px;top:416.30px" width="22.00" height="16.60" viewBox="0 0 22 18" preserveAspectRatio="none"><rect width="22" height="18" fill="#a7bdd6"/><rect x="5" y="4" width="12" height="12" fill="#cfd2c8"/><path d="M7 6 V15 M9.6 6 V15 M12.2 6 V15 M14.8 6 V15" stroke="#8e9488" stroke-width=".7"/><rect x="0" y="2" width="5" height="16" fill="#3a5a30"/><rect x="17.4" y="4" width="4.6" height="14" fill="#46663a"/><rect x="0" y="15.8" width="22" height="2.2" fill="#55604a"/></svg>
<svg class="abs" style="left:117.60px;top:416.30px" width="22.80" height="16.60" viewBox="0 0 22 18" preserveAspectRatio="none"><rect width="22" height="18" fill="#7d9cc8"/><path d="M4 18 L9 3 L14 6 L18 2 L22 5 V18 Z" fill="#c5cbd0"/><path d="M9 3 L10 18 M14 6 L14 18 M18 2 L18.4 18" stroke="#90a0b2" stroke-width=".7"/><rect x="0" y="9" width="4" height="9" fill="#3d5836"/><rect x="0" y="16" width="22" height="2" fill="#5a6458"/></svg>
<svg class="abs" style="left:95.40px;top:418.00px" width="22.80" height="16.80" viewBox="0 0 22 18" preserveAspectRatio="none"><rect width="22" height="18" fill="#b9b6aa"/><rect x="0" y="0" width="22" height="3" fill="#a9a9a4"/><rect x="2" y="3" width="18" height="12" fill="#d9d1bd"/><path d="M4 5 H18 M4 8 H18 M4 11 H18" stroke="#9a917e" stroke-width=".8"/><path d="M5 4 V14 M8.6 4 V14 M12.2 4 V14 M15.8 4 V14" stroke="#a89f8a" stroke-width=".6"/><rect x="0" y="15" width="22" height="3" fill="#4a463c"/></svg>
<div class="abs" style="left:73.80px;top:387.60px;width:66.00px;height:0.90px;background:#8c93a8;opacity:.55"></div>
<div class="abs" style="left:72.80px;top:390.80px;width:68.00px;height:0.90px;background:#8c93a8;opacity:.55"></div>
<div class="abs" style="left:101.80px;top:394.00px;width:10.00px;height:0.90px;background:#8c93a8;opacity:.55"></div>
<div class="abs" style="left:71.80px;top:397.20px;width:70.00px;height:0.90px;background:#8c93a8;opacity:.55"></div>
<div class="abs" style="left:71.80px;top:400.40px;width:70.00px;height:0.90px;background:#8c93a8;opacity:.55"></div>
<div class="abs" style="left:73.80px;top:403.60px;width:66.00px;height:0.90px;background:#8c93a8;opacity:.55"></div>
<div class="abs" style="left:72.80px;top:406.80px;width:68.00px;height:0.90px;background:#8c93a8;opacity:.55"></div>
<div class="abs" style="left:74.80px;top:410.00px;width:64.00px;height:0.90px;background:#8c93a8;opacity:.55"></div>
<div class="t" id="t89" style="left:27.40px;top:359.76px;font-size:10.40px;line-height:12.48px;color:#666;">3</div>
<div class="abs" style="left:44.40px;top:452.50px;width:104.20px;height:78.30px;background:linear-gradient(112deg,#ffffff 0%,#fffffb 28%,#fefdec 58%,#fcf9d4 100%);box-shadow:0 0 1px rgba(0,0,0,.35)"></div>
<div class="abs" style="left:48.00px;top:455.50px;width:21.40px;height:11.60px;background:#164b9d;"></div>
<svg class="abs" style="left:48.00px;top:455.50px;" width="21.4" height="11.6" viewBox="0 0 21.4 11.6"><circle cx="10.7" cy="5.8" r="3.6" fill="none" stroke="#d9d873" stroke-width=".8" stroke-dasharray=".9 1"/></svg>
<div class="abs" style="left:49.40px;top:468.50px;width:18.60px;height:1.00px;background:#7f8fb2;"></div>
<div class="abs" style="left:47.80px;top:470.70px;width:21.80px;height:1.00px;background:#7f8fb2;"></div>
<div class="abs" style="left:51.00px;top:476.90px;width:13.80px;height:13.60px;background:#1f2b66;"></div>
<svg class="abs" style="left:51.00px;top:476.90px;" width="13.8" height="13.6" viewBox="0 0 13.8 13.6"><circle cx="6.9" cy="5.8" r="3.4" fill="none" stroke="#cdbb86" stroke-width="1.3"/><rect x="3.6" y="9" width="6.6" height="1.6" fill="#e8e4d6"/></svg>
<svg class="abs" style="left:50.40px;top:492.50px;" width="16" height="16" viewBox="0 0 16 16"><circle cx="8" cy="8" r="6.9" fill="#f6f0ea" stroke="#cdb1a8" stroke-width=".8"/><rect x="4.6" y="5.4" width="6.8" height="5" fill="#d8d0ca"/></svg>
<svg class="abs" style="left:50.40px;top:509.50px;" width="16" height="16" viewBox="0 0 16 16"><circle cx="8" cy="8" r="7" fill="#fff" stroke="#2a2c78" stroke-width="1.1"/><text x="2.2" y="10.4" font-size="6.2" font-weight="700" fill="#2b3190" textLength="11.6" lengthAdjust="spacingAndGlyphs">МТП</text></svg>
<svg class="abs" style="left:74.70px;top:456.80px" width="21.00" height="18.80" viewBox="0 0 22 18" preserveAspectRatio="none"><rect width="22" height="18" fill="#a9b0a2"/><rect x="0" y="0" width="22" height="4" fill="#9eb6cf"/><rect x="6" y="3" width="10" height="13" fill="#c9cbbf"/><path d="M8 5 V15 M10.4 5 V15 M12.8 5 V15" stroke="#8d9286" stroke-width=".7"/><rect x="0" y="0" width="5.6" height="18" fill="#2f4a2c"/><rect x="16" y="2" width="6" height="16" fill="#3a5533"/><rect x="0" y="15.6" width="22" height="2.4" fill="#4a5244"/></svg>
<svg class="abs" style="left:117.80px;top:456.80px" width="22.40" height="18.80" viewBox="0 0 22 18" preserveAspectRatio="none"><rect width="22" height="18" fill="#4c6344"/><rect x="2" y="0" width="9" height="4" fill="#b8c6d6"/><path d="M7 18 L11 8 L15 8 L20 18 Z" fill="#7b7f77"/><rect x="0" y="0" width="3" height="18" fill="#2c4428"/><rect x="15" y="0" width="7" height="9" fill="#34502f"/></svg>
<svg class="abs" style="left:95.60px;top:462.10px" width="22.30" height="14.60" viewBox="0 0 22 18" preserveAspectRatio="none"><rect width="22" height="18" fill="#3f7fd9"/><rect x="0" y="0" width="22" height="6" fill="#2f6fd0"/><path d="M0 9 L8 6.4 L22 8.6 V18 H0 Z" fill="#d6a675"/><path d="M0 12 L22 11.4 M0 14.4 L22 14" stroke="#b17f52" stroke-width=".7"/><rect x="0" y="15.8" width="22" height="2.2" fill="#3a3026"/></svg>
<svg class="abs" style="left:74.70px;top:508.80px" width="22.00" height="16.60" viewBox="0 0 22 18" preserveAspectRatio="none"><rect width="22" height="18" fill="#a7bdd6"/><rect x="5" y="4" width="12" height="12" fill="#cfd2c8"/><path d="M7 6 V15 M9.6 6 V15 M12.2 6 V15 M14.8 6 V15" stroke="#8e9488" stroke-width=".7"/><rect x="0" y="2" width="5" height="16" fill="#3a5a30"/><rect x="17.4" y="4" width="4.6" height="14" fill="#46663a"/><rect x="0" y="15.8" width="22" height="2.2" fill="#55604a"/></svg>
<svg class="abs" style="left:117.60px;top:508.80px" width="22.80" height="16.60" viewBox="0 0 22 18" preserveAspectRatio="none"><rect width="22" height="18" fill="#7d9cc8"/><path d="M4 18 L9 3 L14 6 L18 2 L22 5 V18 Z" fill="#c5cbd0"/><path d="M9 3 L10 18 M14 6 L14 18 M18 2 L18.4 18" stroke="#90a0b2" stroke-width=".7"/><rect x="0" y="9" width="4" height="9" fill="#3d5836"/><rect x="0" y="16" width="22" height="2" fill="#5a6458"/></svg>
<svg class="abs" style="left:95.40px;top:510.50px" width="22.80" height="16.80" viewBox="0 0 22 18" preserveAspectRatio="none"><rect width="22" height="18" fill="#b9b6aa"/><rect x="0" y="0" width="22" height="3" fill="#a9a9a4"/><rect x="2" y="3" width="18" height="12" fill="#d9d1bd"/><path d="M4 5 H18 M4 8 H18 M4 11 H18" stroke="#9a917e" stroke-width=".8"/><path d="M5 4 V14 M8.6 4 V14 M12.2 4 V14 M15.8 4 V14" stroke="#a89f8a" stroke-width=".6"/><rect x="0" y="15" width="22" height="3" fill="#4a463c"/></svg>
<div class="abs" style="left:73.80px;top:480.10px;width:66.00px;height:0.90px;background:#8c93a8;opacity:.55"></div>
<div class="abs" style="left:72.80px;top:483.30px;width:68.00px;height:0.90px;background:#8c93a8;opacity:.55"></div>
<div class="abs" style="left:101.80px;top:486.50px;width:10.00px;height:0.90px;background:#8c93a8;opacity:.55"></div>
<div class="abs" style="left:71.80px;top:489.70px;width:70.00px;height:0.90px;background:#8c93a8;opacity:.55"></div>
<div class="abs" style="left:71.80px;top:492.90px;width:70.00px;height:0.90px;background:#8c93a8;opacity:.55"></div>
<div class="abs" style="left:73.80px;top:496.10px;width:66.00px;height:0.90px;background:#8c93a8;opacity:.55"></div>
<div class="abs" style="left:72.80px;top:499.30px;width:68.00px;height:0.90px;background:#8c93a8;opacity:.55"></div>
<div class="abs" style="left:74.80px;top:502.50px;width:64.00px;height:0.90px;background:#8c93a8;opacity:.55"></div>
<div class="abs" style="left:74.40px;top:494.90px;width:66.00px;height:1.20px;background:#2c3c78;"></div>
<div class="abs" style="left:82.40px;top:498.50px;width:50.00px;height:1.10px;background:#2c3c78;"></div>
<div class="t" id="t90" style="left:27.40px;top:452.26px;font-size:10.40px;line-height:12.48px;color:#666;">4</div>
<div class="abs" style="left:44.40px;top:545.00px;width:104.20px;height:78.30px;background:linear-gradient(112deg,#ffffff 0%,#fffffb 28%,#fefdec 58%,#fcf9d4 100%);box-shadow:0 0 1px rgba(0,0,0,.35)"></div>
<div class="abs" style="left:48.00px;top:548.00px;width:21.40px;height:11.60px;background:#164b9d;"></div>
<svg class="abs" style="left:48.00px;top:548.00px;" width="21.4" height="11.6" viewBox="0 0 21.4 11.6"><circle cx="10.7" cy="5.8" r="3.6" fill="none" stroke="#d9d873" stroke-width=".8" stroke-dasharray=".9 1"/></svg>
<div class="abs" style="left:49.40px;top:561.00px;width:18.60px;height:1.00px;background:#7f8fb2;"></div>
<div class="abs" style="left:47.80px;top:563.20px;width:21.80px;height:1.00px;background:#7f8fb2;"></div>
<div class="abs" style="left:51.00px;top:569.40px;width:13.80px;height:13.60px;background:#1f2b66;"></div>
<svg class="abs" style="left:51.00px;top:569.40px;" width="13.8" height="13.6" viewBox="0 0 13.8 13.6"><circle cx="6.9" cy="5.8" r="3.4" fill="none" stroke="#cdbb86" stroke-width="1.3"/><rect x="3.6" y="9" width="6.6" height="1.6" fill="#e8e4d6"/></svg>
<svg class="abs" style="left:50.40px;top:585.00px;" width="16" height="16" viewBox="0 0 16 16"><circle cx="8" cy="8" r="6.9" fill="#f6f0ea" stroke="#cdb1a8" stroke-width=".8"/><rect x="4.6" y="5.4" width="6.8" height="5" fill="#d8d0ca"/></svg>
<svg class="abs" style="left:50.40px;top:602.00px;" width="16" height="16" viewBox="0 0 16 16"><circle cx="8" cy="8" r="7" fill="#fff" stroke="#2a2c78" stroke-width="1.1"/><text x="2.2" y="10.4" font-size="6.2" font-weight="700" fill="#2b3190" textLength="11.6" lengthAdjust="spacingAndGlyphs">МТП</text></svg>
<svg class="abs" style="left:74.70px;top:549.30px" width="21.00" height="18.80" viewBox="0 0 22 18" preserveAspectRatio="none"><rect width="22" height="18" fill="#a9b0a2"/><rect x="0" y="0" width="22" height="4" fill="#9eb6cf"/><rect x="6" y="3" width="10" height="13" fill="#c9cbbf"/><path d="M8 5 V15 M10.4 5 V15 M12.8 5 V15" stroke="#8d9286" stroke-width=".7"/><rect x="0" y="0" width="5.6" height="18" fill="#2f4a2c"/><rect x="16" y="2" width="6" height="16" fill="#3a5533"/><rect x="0" y="15.6" width="22" height="2.4" fill="#4a5244"/></svg>
<svg class="abs" style="left:117.80px;top:549.30px" width="22.40" height="18.80" viewBox="0 0 22 18" preserveAspectRatio="none"><rect width="22" height="18" fill="#4c6344"/><rect x="2" y="0" width="9" height="4" fill="#b8c6d6"/><path d="M7 18 L11 8 L15 8 L20 18 Z" fill="#7b7f77"/><rect x="0" y="0" width="3" height="18" fill="#2c4428"/><rect x="15" y="0" width="7" height="9" fill="#34502f"/></svg>
<svg class="abs" style="left:95.60px;top:554.60px" width="22.30" height="14.60" viewBox="0 0 22 18" preserveAspectRatio="none"><rect width="22" height="18" fill="#3f7fd9"/><rect x="0" y="0" width="22" height="6" fill="#2f6fd0"/><path d="M0 9 L8 6.4 L22 8.6 V18 H0 Z" fill="#d6a675"/><path d="M0 12 L22 11.4 M0 14.4 L22 14" stroke="#b17f52" stroke-width=".7"/><rect x="0" y="15.8" width="22" height="2.2" fill="#3a3026"/></svg>
<svg class="abs" style="left:74.70px;top:601.30px" width="22.00" height="16.60" viewBox="0 0 22 18" preserveAspectRatio="none"><rect width="22" height="18" fill="#a7bdd6"/><rect x="5" y="4" width="12" height="12" fill="#cfd2c8"/><path d="M7 6 V15 M9.6 6 V15 M12.2 6 V15 M14.8 6 V15" stroke="#8e9488" stroke-width=".7"/><rect x="0" y="2" width="5" height="16" fill="#3a5a30"/><rect x="17.4" y="4" width="4.6" height="14" fill="#46663a"/><rect x="0" y="15.8" width="22" height="2.2" fill="#55604a"/></svg>
<svg class="abs" style="left:117.60px;top:601.30px" width="22.80" height="16.60" viewBox="0 0 22 18" preserveAspectRatio="none"><rect width="22" height="18" fill="#7d9cc8"/><path d="M4 18 L9 3 L14 6 L18 2 L22 5 V18 Z" fill="#c5cbd0"/><path d="M9 3 L10 18 M14 6 L14 18 M18 2 L18.4 18" stroke="#90a0b2" stroke-width=".7"/><rect x="0" y="9" width="4" height="9" fill="#3d5836"/><rect x="0" y="16" width="22" height="2" fill="#5a6458"/></svg>
<svg class="abs" style="left:95.40px;top:603.00px" width="22.80" height="16.80" viewBox="0 0 22 18" preserveAspectRatio="none"><rect width="22" height="18" fill="#b9b6aa"/><rect x="0" y="0" width="22" height="3" fill="#a9a9a4"/><rect x="2" y="3" width="18" height="12" fill="#d9d1bd"/><path d="M4 5 H18 M4 8 H18 M4 11 H18" stroke="#9a917e" stroke-width=".8"/><path d="M5 4 V14 M8.6 4 V14 M12.2 4 V14 M15.8 4 V14" stroke="#a89f8a" stroke-width=".6"/><rect x="0" y="15" width="22" height="3" fill="#4a463c"/></svg>
<div class="abs" style="left:73.80px;top:572.60px;width:66.00px;height:0.90px;background:#8c93a8;opacity:.55"></div>
<div class="abs" style="left:72.80px;top:575.80px;width:68.00px;height:0.90px;background:#8c93a8;opacity:.55"></div>
<div class="abs" style="left:101.80px;top:579.00px;width:10.00px;height:0.90px;background:#8c93a8;opacity:.55"></div>
<div class="abs" style="left:71.80px;top:582.20px;width:70.00px;height:0.90px;background:#8c93a8;opacity:.55"></div>
<div class="abs" style="left:71.80px;top:585.40px;width:70.00px;height:0.90px;background:#8c93a8;opacity:.55"></div>
<div class="abs" style="left:73.80px;top:588.60px;width:66.00px;height:0.90px;background:#8c93a8;opacity:.55"></div>
<div class="abs" style="left:72.80px;top:591.80px;width:68.00px;height:0.90px;background:#8c93a8;opacity:.55"></div>
<div class="abs" style="left:74.80px;top:595.00px;width:64.00px;height:0.90px;background:#8c93a8;opacity:.55"></div>
<div class="t" id="t91" style="left:27.40px;top:544.76px;font-size:10.40px;line-height:12.48px;color:#666;">5</div>
</div></div>
<div class="abs" style="left:177.60px;top:539.00px;width:841.40px;height:24.60px;background:#ebebeb;"></div>
<div class="abs" style="left:177.60px;top:538.40px;width:841.40px;height:1.00px;background:#cdcdcd;"></div>
<div class="t" id="t92" style="transform:scaleX(1.0030);left:186.00px;top:544.97px;font-size:10.60px;line-height:12.72px;color:#5f5f5f;">Щелкните, чтобы добавить заметки</div>
<div class="abs" style="left:1006.60px;top:161.50px;width:12.40px;height:377.00px;background:#ededed;"></div>
<div class="abs" style="left:1007.60px;top:163.60px;width:10.00px;height:10.60px;background:#fff;border:1px solid #c9c9c9"></div>
<svg class="abs" style="left:1009.60px;top:166.80px;" width="6" height="4" viewBox="0 0 6 4"><path d="M0 3.6 L3 .4 L6 3.6 Z" fill="#555"/></svg>
<div class="abs" style="left:1007.60px;top:174.00px;width:10.00px;height:12.40px;background:#fff;border:1px solid #c9c9c9"></div>
<div class="abs" style="left:1007.60px;top:486.60px;width:10.00px;height:10.60px;background:#fff;border:1px solid #c9c9c9"></div>
<svg class="abs" style="left:1009.60px;top:490.00px;" width="6" height="4" viewBox="0 0 6 4"><path d="M0 .4 L3 3.6 L6 .4 Z" fill="#555"/></svg>
<svg class="abs" style="left:1010.20px;top:501.60px;" width="5.4" height="6.4" viewBox="0 0 7 8"><path d="M.4 3.4 L3.4 .6 L6.4 3.4 Z M.4 7.2 L3.4 4.4 L6.4 7.2 Z" fill="#555"/></svg>
<svg class="abs" style="left:1010.20px;top:512.60px;" width="5.4" height="6.4" viewBox="0 0 7 8"><path d="M.4 .6 L3.4 3.4 L6.4 .6 Z M.4 4.4 L3.4 7.2 L6.4 4.4 Z" fill="#555"/></svg>
<div class="abs" style="left:19.00px;top:563.60px;width:1000.00px;height:16.60px;background:#f3f3f3;"></div>
<div class="t" id="t93" style="transform:scaleX(0.9204);left:25.40px;top:566.06px;font-size:8.60px;line-height:10.32px;color:#3c3c3c;">Слайд 1 из 40</div>
<svg class="abs" style="left:95.00px;top:566.60px;" width="11" height="9" viewBox="0 0 11 9"><path d="M.6 1 C2.4 .4 4 .6 5.4 1.6 V8.2 C4 7.2 2.4 7 .6 7.6 Z M10.2 1 C8.4 .4 6.8 .6 5.4 1.6 V8.2 C6.8 7.2 8.4 7 10.2 7.6 Z" fill="none" stroke="#777" stroke-width=".8"/><path d="M6.6 4.6 L7.8 6 L9.8 3.2" fill="none" stroke="#777" stroke-width=".8"/></svg>
<div class="t" id="t94" style="transform:scaleX(0.9817);left:117.80px;top:566.47px;font-size:8.80px;line-height:10.56px;color:#222;">русский</div>
<svg class="abs" style="left:630.00px;top:567.00px;" width="9" height="9" viewBox="0 0 9 9"><path d="M4.4 .6 L6.6 3.2 H2.2 Z" fill="#555"/><path d="M.4 4.6 H8.4 M.4 6.4 H8.4 M.4 8.2 H8.4" stroke="#555" stroke-width=".8"/></svg>
<div class="t" id="t95" style="transform:scaleX(0.9448);left:642.00px;top:566.47px;font-size:8.80px;line-height:10.56px;color:#3c3c3c;">Заметки</div>
<svg class="abs" style="left:689.00px;top:566.60px;" width="11" height="9" viewBox="0 0 11 9"><path d="M.6 .6 H10.2 V6.2 H4.6 L2.4 8.4 V6.2 H.6 Z" fill="#6a6a6a"/></svg>
<div class="t" id="t96" style="transform:scaleX(0.9922);left:701.00px;top:566.47px;font-size:8.80px;line-height:10.56px;color:#3c3c3c;">Примечания</div>
<div class="abs" style="left:766.60px;top:563.60px;width:26.60px;height:16.60px;background:#c8c8c8;"></div>
<svg class="abs" style="left:774.60px;top:567.40px;" width="10" height="8" viewBox="0 0 10 8"><rect x=".5" y=".5" width="9" height="7" fill="none" stroke="#555" stroke-width=".9"/><path d="M3 .5 V7.5 M4.4 2.4 H8 M4.4 4 H8" stroke="#555" stroke-width=".7"/></svg>
<svg class="abs" style="left:802.20px;top:567.20px;" width="10" height="9" viewBox="0 0 10 9"><g fill="none" stroke="#666" stroke-width=".9"><rect x=".5" y=".5" width="3.6" height="3"/><rect x="5.9" y=".5" width="3.6" height="3"/><rect x=".5" y="5.2" width="3.6" height="3"/><rect x="5.9" y="5.2" width="3.6" height="3"/></g></svg>
<svg class="abs" style="left:830.60px;top:566.80px;" width="9" height="9.6" viewBox="0 0 9 9.6"><rect x=".5" y=".5" width="8" height="8.6" fill="none" stroke="#666" stroke-width=".9"/><path d="M2.4 3 H6.6 M2.4 5 H6.6 M4.5 .5 V9" stroke="#666" stroke-width=".7"/></svg>
<svg class="abs" style="left:857.00px;top:567.00px;" width="11" height="9" viewBox="0 0 11 9"><path d="M.4 .8 H10.4" stroke="#666" stroke-width="1.1"/><rect x="1.6" y="1.4" width="7.6" height="4.4" fill="none" stroke="#666" stroke-width=".9"/><path d="M5.4 5.8 V8 M3.4 8.4 H7.4" stroke="#666" stroke-width=".9"/></svg>
<div class="abs" style="left:881.00px;top:571.40px;width:4.40px;height:1.00px;background:#555;"></div>
<div class="abs" style="left:888.50px;top:571.60px;width:73.50px;height:0.80px;background:#a9a9a9;"></div>
<div class="abs" style="left:925.00px;top:569.80px;width:1.00px;height:4.40px;background:#b5b5b5;"></div>
<div class="abs" style="left:911.40px;top:567.40px;width:2.40px;height:9.20px;background:#6a6a6a;"></div>
<svg class="abs" style="left:963.60px;top:568.60px;" width="6" height="6" viewBox="0 0 6 6"><path d="M0 3 H6 M3 0 V6" stroke="#555" stroke-width="1"/></svg>
<div class="t" id="t97" style="transform:scaleX(0.8778);left:977.40px;top:566.66px;font-size:8.60px;line-height:10.32px;color:#3c3c3c;">68 %</div>
<svg class="abs" style="left:1005.00px;top:567.00px;" width="10" height="10" viewBox="0 0 10 10"><rect x=".5" y=".5" width="9" height="9" fill="none" stroke="#666" stroke-width=".9" stroke-dasharray="2 1.4"/><path d="M2.6 2.6 L7.4 7.4 M7.4 2.6 L2.6 7.4" stroke="#666" stroke-width=".7"/><rect x="4" y="4" width="2" height="2" fill="#f3f3f3"/></svg>
<div class="abs" style="left:19.00px;top:580.20px;width:1000.00px;height:28.80px;background:#0a0b10;"></div>
<svg class="abs" style="left:30.60px;top:588.00px;" width="12" height="12" viewBox="0 0 12 12"><g fill="#fff"><path d="M0 1.6 L5.2 .9 V5.6 H0 Z"/><path d="M6 .8 L12 0 V5.6 H6 Z"/><path d="M0 6.4 H5.2 V11.1 L0 10.4 Z"/><path d="M6 6.4 H12 V12 L6 11.2 Z"/></g></svg>
<div class="abs" style="left:54.20px;top:580.20px;width:211.00px;height:28.80px;background:#f1f1f1;"></div>
<svg class="abs" style="left:63.40px;top:587.60px;" width="12" height="13" viewBox="0 0 12 13"><circle cx="7.2" cy="4.8" r="3.9" fill="none" stroke="#2b2b2b" stroke-width="1.2"/><path d="M4.4 7.8 L.8 11.8" stroke="#2b2b2b" stroke-width="1.3" stroke-linecap="round"/></svg>
<div class="t" id="t98" style="transform:scaleX(0.9379);left:83.60px;top:588.04px;font-size:12.00px;line-height:14.40px;color:#3a3a3a;">Поиск</div>
<svg class="abs" style="left:214.80px;top:584.00px;" width="42" height="22" viewBox="0 0 42 22"><path d="M14.8 2 C16.2 7 17.6 8.4 22.6 9.8 C17.6 11.2 16.2 12.6 14.8 17.6 C13.4 12.6 12 11.2 7 9.8 C12 8.4 13.4 7 14.8 2 Z" fill="#f7c331" stroke="#f7c331" stroke-width="1.2" stroke-linejoin="round"/><path d="M3 13.4 C3.4 15.4 4 16 6 16.4 C4 16.8 3.4 17.4 3 19.4 C2.6 17.4 2 16.8 0 16.4 C2 16 2.6 15.4 3 13.4 Z" fill="#37a5e0"/><path d="M31.4 8.6 C31.9 11.4 32.8 12.3 35.6 12.8 C32.8 13.3 31.9 14.2 31.4 17 C30.9 14.2 30 13.3 27.2 12.8 C30 12.3 30.9 11.4 31.4 8.6 Z" fill="#f6cf54"/><circle cx="27" cy="2.6" r="1.2" fill="#b98f4a"/><circle cx="40" cy="18" r="1" fill="#c2cf7a"/></svg>
<svg class="abs" style="left:276.00px;top:587.40px;" width="14" height="13" viewBox="0 0 14 13"><rect x=".7" y="2.6" width="8.2" height="7.6" fill="none" stroke="#fff" stroke-width="1.2"/><path d="M.7 .6 H8.9 M.7 12.2 H8.9" stroke="#fff" stroke-width="1.1"/><path d="M11.6 1 V12" stroke="#fff" stroke-width="1.2"/><rect x="10.8" y="4.6" width="1.8" height="1.8" fill="#fff"/></svg>
<svg class="abs" style="left:311.40px;top:587.00px;" width="17" height="14.6" viewBox="0 0 19 17"><path d="M.6 2.6 H7.4 L9 4.6 H18.2 V15.6 H.6 Z" fill="#f4c64a"/><rect x=".6" y="6" width="17.6" height="9.8" fill="#fbdc73"/><path d="M4.4 11 H14.4 V16 H4.4 Z" fill="#3c8fd6"/><rect x="7" y="12.8" width="4.8" height="3.2" fill="#e9f1f9"/></svg>
<svg class="abs" style="left:347.10px;top:585.60px;" width="17.2" height="17.2" viewBox="0 0 20 20"><circle cx="10" cy="10" r="10" fill="#f4c20d"/>
<path d="M10 10 L1.34 5 A10 10 0 0 1 18.66 5 Z" fill="#db4437"/>
<path d="M10 10 L1.34 5 A10 10 0 0 0 10 20 Z" fill="#0f9d58"/>
<path d="M10 10 L18.66 5 H10 Z" fill="#db4437"/>
<circle cx="10" cy="10" r="4.5" fill="#fff"/><circle cx="10" cy="10" r="3.6" fill="#4285f4"/></svg>
<svg class="abs" style="left:382.60px;top:585.40px;" width="17.6" height="17.6" viewBox="0 0 17.6 17.6"><ellipse cx="8.8" cy="8.8" rx="8.4" ry="8.6" fill="#e0202c"/><ellipse cx="8.8" cy="8.8" rx="3.9" ry="6.3" fill="#0a0b10"/></svg>
<svg class="abs" style="left:417.60px;top:585.60px;" width="20" height="17" viewBox="0 0 20 17"><rect x="6" y="0" width="13.6" height="17" rx="1" fill="#2b7cd3"/><rect x="6" y="0" width="13.6" height="5.6" fill="#41a5ee"/><rect x="6" y="11.4" width="13.6" height="5.6" fill="#185abd"/><rect x="0" y="3.6" width="11.4" height="10.4" rx="1" fill="#185abd"/><text x="2" y="12" font-size="8.6" font-weight="700" fill="#fff">W</text></svg>
<svg class="abs" style="left:454.00px;top:585.00px;" width="22" height="19" viewBox="0 0 22 19"><path d="M8.6 .6 C13.6 .6 16.8 3 16.8 8 C16.8 13 13.6 15.4 8.6 15.4 C7.8 15.4 7 15.3 6.4 15.2 L3.6 17.6 V14.2 C1.4 13 .6 10.8 .6 8 C.6 3 3.6 .6 8.6 .6 Z" fill="#7d5bd6"/><path d="M6 4.4 C5.6 7.6 8.4 10.8 11.6 11.2 L12.4 9.8 L10.8 8.8 L10 9.4 C9 9 8 8 7.6 7 L8.2 6.2 L7.4 4.4 Z" fill="#fff"/><rect x="10.6" y="8.6" width="11" height="10" rx="3" fill="#e23b3b"/><text x="11.6" y="16.6" font-size="7.6" font-weight="700" fill="#fff">10</text></svg>
<svg class="abs" style="left:490.40px;top:585.60px;" width="17.2" height="17.2" viewBox="0 0 20 20"><circle cx="10" cy="10" r="10" fill="#f4c20d"/>
<path d="M10 10 L1.34 5 A10 10 0 0 1 18.66 5 Z" fill="#db4437"/>
<path d="M10 10 L1.34 5 A10 10 0 0 0 10 20 Z" fill="#0f9d58"/>
<path d="M10 10 L18.66 5 H10 Z" fill="#db4437"/>
<circle cx="10" cy="10" r="4.5" fill="#fff"/><circle cx="10" cy="10" r="3.6" fill="#4285f4"/></svg>
<svg class="abs" style="left:500.60px;top:593.00px;" width="10" height="10" viewBox="0 0 10 10"><circle cx="5" cy="5" r="5" fill="#c9a23a"/><circle cx="5" cy="3.8" r="2.2" fill="#5a3a2a"/><ellipse cx="5" cy="8.6" rx="3.4" ry="2.6" fill="#2a2a2a"/></svg>
<svg class="abs" style="left:526.10px;top:585.60px;" width="17.2" height="17.2" viewBox="0 0 20 20"><circle cx="10" cy="10" r="10" fill="#f4c20d"/>
<path d="M10 10 L1.34 5 A10 10 0 0 1 18.66 5 Z" fill="#db4437"/>
<path d="M10 10 L1.34 5 A10 10 0 0 0 10 20 Z" fill="#0f9d58"/>
<path d="M10 10 L18.66 5 H10 Z" fill="#db4437"/>
<circle cx="10" cy="10" r="4.5" fill="#fff"/><circle cx="10" cy="10" r="3.6" fill="#4285f4"/></svg>
<svg class="abs" style="left:536.40px;top:593.00px;" width="10" height="10" viewBox="0 0 10 10"><circle cx="5" cy="5" r="5" fill="#e9dfe0"/><circle cx="5" cy="3.8" r="2.2" fill="#8a4a3a"/><ellipse cx="5" cy="8.6" rx="3.4" ry="2.6" fill="#c43a5a"/></svg>
<div class="abs" style="left:553.00px;top:580.20px;width:35.60px;height:28.80px;background:#3a3b40;"></div>
<svg class="abs" style="left:560.40px;top:585.00px;" width="21" height="18" viewBox="0 0 21 18"><circle cx="12" cy="9" r="8.6" fill="#ed6c47"/><path d="M12 .4 A8.6 8.6 0 0 1 20.6 9 H12 Z" fill="#ff8f6b"/><path d="M3.6 12 A8.6 8.6 0 0 0 20.6 9 H12 Z" fill="#d35230"/><rect x="0" y="4" width="10.6" height="10.4" rx="1" fill="#c43e1c"/><text x="2.6" y="12.4" font-size="8.6" font-weight="700" fill="#fff">P</text></svg>
<svg class="abs" style="left:598.00px;top:585.20px;" width="18" height="18" viewBox="0 0 18 18"><circle cx="9" cy="9" r="8.8" fill="#1b9de2"/><path d="M.4 10 C.6 4 5 0.4 9.6 .4 C14 .4 17.6 3.6 17.6 8 C17.6 10.6 15.6 12.2 13.4 12.2 C11.6 12.2 10.6 11.4 10.6 10.4 C10.6 9.6 11.4 9.4 11.4 8.4 C11.4 7 10 5.6 8 5.6 C4.6 5.6 2.4 8.6 .4 10 Z" fill="#35c1f1"/><path d="M.4 10 C1 6 4.6 5 8 5.6 C5.4 6.6 4.4 9 4.8 11.4 C5.4 14.6 8 17 12 17.2 C7 19 .8 15.6 .4 10 Z" fill="#0c59a4"/><path d="M9 17.8 C12.6 17.8 15.8 15.6 17 12.6 C15 14.4 10.6 14.6 8.6 11.4 C8 13.6 8.6 16.4 9 17.8 Z" fill="#4bd37a" opacity=".85"/></svg>
<svg class="abs" style="left:632.60px;top:585.00px;" width="20" height="18" viewBox="0 0 20 18"><rect x=".4" y=".4" width="19.2" height="17.2" rx="6.6" fill="#0b5cff"/><text x="3.6" y="12" font-size="8.2" font-weight="700" fill="#fff">zm</text></svg>
<div class="abs" style="left:412.60px;top:607.20px;width:30.00px;height:1.80px;background:#86b7ec;"></div>
<div class="abs" style="left:449.00px;top:607.20px;width:30.00px;height:1.80px;background:#86b7ec;"></div>
<div class="abs" style="left:484.40px;top:607.20px;width:30.00px;height:1.80px;background:#86b7ec;"></div>
<div class="abs" style="left:520.00px;top:607.20px;width:30.00px;height:1.80px;background:#86b7ec;"></div>
<div class="abs" style="left:555.60px;top:607.20px;width:30.00px;height:1.80px;background:#86b7ec;"></div>
<div class="abs" style="left:592.00px;top:607.20px;width:30.00px;height:1.80px;background:#86b7ec;"></div>
<div class="abs" style="left:627.60px;top:607.20px;width:30.00px;height:1.80px;background:#86b7ec;"></div>
<svg class="abs" style="left:746.00px;top:586.60px;" width="19" height="12" viewBox="0 0 19 12"><path d="M4.6 11.6 C2 11.6 .4 10 .4 8 C.4 6 2 4.6 3.8 4.6 C4.4 2 6.6 .4 9 .4 C11.6 .4 13.6 2 14.2 4.2 C16.6 4.2 18.4 5.8 18.4 8 C18.4 10 16.8 11.6 14.6 11.6 Z" fill="#c9dcf6"/><path d="M4.6 11.6 C2 11.6 .4 10 .4 8 C.4 6.6 1.2 5.4 2.4 4.9 C4 7.6 9 9.6 16 9.4 C16.8 10.6 15.8 11.6 14.6 11.6 Z" fill="#8fb4ea"/></svg>
<div class="t" id="t99" style="transform:scaleX(0.9238);left:771.00px;top:588.32px;font-size:9.80px;line-height:11.76px;color:#fff;">3°C</div>
<svg class="abs" style="left:804.40px;top:590.40px;" width="10" height="6" viewBox="0 0 10 6"><path d="M.8 5.2 L5 1 L9.2 5.2" fill="none" stroke="#fff" stroke-width="1.1"/></svg>
<svg class="abs" style="left:822.00px;top:587.40px;" width="10" height="13" viewBox="0 0 10 13"><rect x=".6" y="2.6" width="6.6" height="6.6" rx="1" fill="none" stroke="#fff" stroke-width="1"/><path d="M7.2 5 L9.4 3.6 V8.2 L7.2 6.8" fill="none" stroke="#fff" stroke-width=".9"/><path d="M1.6 .8 C3.2 .2 5.4 .2 7 .8 M1.6 11.4 C3.2 12 5.4 12 7 11.4" fill="none" stroke="#fff" stroke-width=".9"/></svg>
<svg class="abs" style="left:839.60px;top:586.60px;" width="9" height="14" viewBox="0 0 9 14"><rect x="2.2" y=".4" width="4.4" height="8.6" rx="2.2" fill="#fff"/><path d="M.6 7 C.6 9.6 2.4 11 4.4 11 C6.4 11 8.2 9.6 8.2 7 M4.4 11 V13.2 M2.2 13.4 H6.6" fill="none" stroke="#fff" stroke-width=".9"/></svg>
<svg class="abs" style="left:855.60px;top:589.00px;" width="13" height="9" viewBox="0 0 13 9"><rect x="2.6" y="1.6" width="9.6" height="6" fill="none" stroke="#fff" stroke-width="1"/><rect x="3.8" y="2.8" width="6" height="3.6" fill="#fff"/><rect x="1.2" y="3.4" width="1.4" height="2.4" fill="#fff"/><path d="M2 0 L4 2.4 M4.6 0 L3 2.6" stroke="#fff" stroke-width=".8"/></svg>
<svg class="abs" style="left:874.60px;top:587.60px;" width="12" height="12" viewBox="0 0 12 12"><g fill="none" stroke="#fff" stroke-width="1.1"><path d="M1 11 A10 10 0 0 1 11 1" opacity=".55"/><path d="M4 11 A7 7 0 0 1 11 4"/><path d="M7 11 A4 4 0 0 1 11 7"/></g><circle cx="10.4" cy="10.6" r="1.2" fill="#fff"/></svg>
<svg class="abs" style="left:891.60px;top:587.60px;" width="13" height="12" viewBox="0 0 13 12"><path d="M.6 4.2 H2.8 L5.6 1.6 V10.4 L2.8 7.8 H.6 Z" fill="none" stroke="#fff" stroke-width=".95"/><path d="M7.4 4 C8.2 5 8.2 7 7.4 8 M9.2 2.6 C10.6 4.4 10.6 7.6 9.2 9.4 M11 1.2 C13 4 13 8 11 10.8" fill="none" stroke="#fff" stroke-width=".9"/></svg>
<div class="t" id="t100" style="transform:scaleX(0.9846);left:910.60px;top:589.44px;font-size:8.20px;line-height:9.84px;color:#fff;">УКР</div>
<div class="t" id="t101" style="transform:scaleX(0.8831);left:946.40px;top:582.66px;font-size:8.60px;line-height:10.32px;color:#fff;">16:13</div>
<div class="t" id="t102" style="transform:scaleX(0.9113);left:936.30px;top:595.86px;font-size:8.60px;line-height:10.32px;color:#fff;">04.12.2025</div>
<svg class="abs" style="left:988.60px;top:587.40px;" width="13" height="13" viewBox="0 0 13 13"><path d="M.8 .8 H12 V9.4 H9.4 L9.4 12 L6.6 9.4 H.8 Z" fill="#fff"/><path d="M2.8 3.2 H10 M2.8 5.2 H10 M2.8 7.2 H7" stroke="#0a0b10" stroke-width=".9"/><circle cx="10.4" cy="10" r="2.4" fill="#0a0b10"/><circle cx="10.4" cy="10" r="1.7" fill="#fff"/><path d="M9.4 10 H11.4" stroke="#0a0b10" stroke-width=".7"/></svg>
<div class="abs" style="left:1014.20px;top:580.20px;width:0.80px;height:28.80px;background:#8a8a8a;"></div>
<div class="abs" style="left:14.60px;top:556.00px;width:30.00px;height:30.00px;background:#2b2b2d;border-radius:50%"></div>
<svg class="abs" style="left:21.60px;top:563.00px;" width="16" height="16" viewBox="0 0 16 16"><path d="M2.4 10 L9.6 2.4 C10.4 1.6 11.4 1.6 12.2 2.4 L12.6 2.8 C13.4 3.6 13.4 4.6 12.6 5.4 L5.4 13 L2 13.6 Z M8.4 3.8 L11.2 6.6" fill="none" stroke="#2fe08c" stroke-width="1.3" stroke-linejoin="round"/><path d="M1.4 15.2 H14.4" stroke="#2fe08c" stroke-width="1.3" stroke-linecap="round"/></svg>
<div class="abs" style="left:1109px;top:103px;width:160px;height:449px;background:#1b1b1d;border-radius:9px;overflow:hidden">
<div class="abs" style="left:-1109px;top:-103px;width:1px;height:1px">
<div class="abs" style="left:1153.60px;top:112.70px;width:72.00px;height:80.00px;background:#1527a9;"></div>
<div class="abs" style="left:1153.60px;top:112.70px;width:72.00px;height:80.00px;overflow:hidden">
<svg class="abs" style="left:0;top:0;filter:blur(0.8px)" width="72" height="80" viewBox="0 0 72 80"><ellipse cx="36" cy="37" rx="26.4" ry="32" fill="#17110f"/>
<rect x="9.6" y="40" width="52.8" height="42" fill="#17110f"/>
<ellipse cx="36" cy="35" rx="16.6" ry="20.4" fill="#d8a78f"/>
<path d="M17 30 C18 14 30 9 38 11 C48 12 55 20 55 32 C51 24 46 19 38 18 C28 17 21 22 17 30 Z" fill="#17110f"/>
<ellipse cx="36" cy="47.4" rx="6.6" ry="2.3" fill="#c42a3a"/>
<ellipse cx="28.6" cy="33" rx="3" ry="1.2" fill="#4a2a24"/><ellipse cx="43.4" cy="33" rx="3" ry="1.2" fill="#4a2a24"/>
<rect x="29" y="53" width="14" height="6" fill="#cf9a82"/><path d="M8 82 C10 62 24 58 36 60 C48 58 62 62 64 82 Z" fill="#1b1a1c"/></svg></div>
<div class="abs" style="left:1109.00px;top:192.00px;width:160.00px;height:90.00px;background:linear-gradient(90deg,#0a1836 0%,#0c2250 45%,#123a7e 70%,#0e2c66 100%);"></div>
<div class="abs" style="left:1109.00px;top:192.00px;width:160.00px;height:90.00px;overflow:hidden">
<svg class="abs" style="left:0;top:0;filter:blur(0.8px)" width="160" height="90" viewBox="0 0 160 90"><g stroke="#cfd8ea" stroke-width="1.7" stroke-dasharray="5 1.2 3 1 7 1.4 4 1.2" opacity=".8"><path d="M4 4.2 H115 M4 8.2 H108 M4 14.2 H100 M4 19.8 H88"/></g>
<rect x="125.4" y="3.4" width="14.6" height="19" rx="1.6" fill="#8fa6c9" stroke="#c9d6ea" stroke-width=".8"/><rect x="143.6" y="3.4" width="14.6" height="19" rx="1.6" fill="#7f9ed0" stroke="#c9d6ea" stroke-width=".8"/>
<text x="128" y="17" font-size="8" font-weight="700" fill="#1a2a5a">КІ</text><text x="145.6" y="17" font-size="8" font-weight="700" fill="#0e2a6a">Fм</text>
<g><rect x="9.6" y="30" width="18" height="4" fill="#e8772e"/><rect x="9.6" y="35.4" width="18" height="4" fill="#3a8fd6"/><rect x="9.6" y="40.8" width="18" height="4" fill="#e8772e"/><rect x="9.6" y="46.2" width="18" height="4" fill="#3a8fd6"/></g>
<g fill="#e4ebf7"><rect x="28.6" y="31" width="26" height="2.2"/><rect x="28.6" y="35.6" width="33" height="2.2"/><rect x="28.6" y="40.2" width="30" height="2.2"/><rect x="28.6" y="44.8" width="27" height="2.2"/><rect x="28.6" y="49.4" width="31" height="2.2"/></g>
<g fill="#ef8a3a"><rect x="9" y="60.4" width="52" height="2.8"/><rect x="13" y="67" width="46" height="2.8"/></g>
<g fill="#9fc4f0"><circle cx="128" cy="38" r=".9"/><circle cx="140" cy="46" r=".9"/><circle cx="150" cy="34" r=".9"/><circle cx="134" cy="58" r=".9"/><circle cx="148" cy="66" r=".9"/><circle cx="156" cy="52" r=".9"/><circle cx="126" cy="74" r=".9"/><circle cx="144" cy="80" r=".9"/></g>
<path d="M128 38 L140 46 L150 34 M134 58 L148 66 L156 52 M140 46 L134 58" stroke="#4d7ec4" stroke-width=".5" fill="none"/>
<ellipse cx="88" cy="50" rx="26" ry="36" fill="#15100f"/><rect x="62" y="52" width="52" height="40" fill="#15100f"/>
<ellipse cx="87" cy="46" rx="17" ry="21.6" fill="#dcae98"/>
<path d="M69 42 C69 22 80 17 88 17 C98 17 106 24 105 44 C101 32 96 26 87 26 C78 26 72 33 69 42 Z" fill="#15100f"/>
<path d="M79 56 C83 60 91 60 95 56 C92 58 82 58 79 56 Z" fill="#a8453f"/>
<ellipse cx="79.6" cy="43" rx="2.8" ry="1.2" fill="#3a2420"/><ellipse cx="94.4" cy="43" rx="2.8" ry="1.2" fill="#3a2420"/>
<path d="M74 76 C78 70 98 70 102 76 V90 H74 Z" fill="#a9cbe4"/></svg></div>
<div class="abs" style="left:1109.00px;top:282.00px;width:160.00px;height:91.60px;background:linear-gradient(180deg,#f0f5f8 0%,#eaf0f4 60%,#dfe5e8 100%);"></div>
<div class="abs" style="left:1109.00px;top:282.00px;width:160.00px;height:91.60px;overflow:hidden">
<svg class="abs" style="left:0;top:0;filter:blur(0.8px)" width="160" height="91.6" viewBox="0 0 160 91.6"><rect x="2" y="60" width="40" height="12" fill="#c99477"/><rect x="2" y="56" width="26" height="6" fill="#d9cfc2"/><rect x="0" y="70" width="50" height="22" fill="#a9ada6"/>
<rect x="116" y="46" width="42" height="34" fill="#dfe2e4"/><rect x="132" y="38" width="26" height="30" fill="#cfd4d9"/>
<g fill="#aab3bd"><rect x="120" y="50" width="2" height="26"/><rect x="126" y="50" width="2" height="26"/><rect x="136" y="42" width="2" height="26"/><rect x="142" y="42" width="2" height="26"/><rect x="148" y="42" width="2" height="26"/></g>
<path d="M118 92 C118 74 128 66 140 70 C150 64 160 72 160 92 Z" fill="#7aa95e"/>
<rect x="48" y="36" width="10" height="8" fill="#3f6fb4"/>
<ellipse cx="87" cy="44" rx="34" ry="38" fill="#5f2e22"/><rect x="52" y="46" width="70" height="46" fill="#592a1e"/>
<ellipse cx="86.6" cy="47.4" rx="21" ry="24.4" fill="#e2b39f"/>
<path d="M64 44 C64 22 78 14 90 16 C102 17 110 28 108 46 C104 34 98 27 88 26 C76 26 68 33 64 44 Z" fill="#5f2e22"/>
<path d="M76 58 C81 64 93 64 98 58 C94 60.6 80 60.6 76 58 Z" fill="#fff"/><path d="M76 58 C81 66 93 66 98 58 C94 62.6 80 62.6 76 58 Z" fill="#b8554f"/>
<ellipse cx="78" cy="43" rx="3" ry="1.3" fill="#4a2c24"/><ellipse cx="95" cy="43" rx="3" ry="1.3" fill="#4a2c24"/>
<path d="M40 92 C44 78 60 72 70 72 L104 72 C118 72 134 80 140 92 Z" fill="#2b2b36"/></svg></div>
<div class="abs" style="left:1109.00px;top:373.60px;width:160.00px;height:88.60px;background:linear-gradient(100deg,#7f7f7e 0%,#adadab 16%,#e2e2df 32%,#cfcfcc 50%,#ebebe8 66%,#e2e2df 100%);"></div>
<div class="abs" style="left:1109.00px;top:373.60px;width:160.00px;height:88.60px;overflow:hidden">
<svg class="abs" style="left:0;top:0;filter:blur(1px)" width="160" height="88.6" viewBox="0 0 160 88.6"><path d="M0 0 H30 L12 88 H0 Z" fill="#8a8986" opacity=".7"/><path d="M54 0 H84 L52 88 H30 Z" fill="#f2f2f0" opacity=".8"/>
<rect x="0" y="36" width="12" height="36" fill="#6d6a66" opacity=".7"/>
<path d="M140 58 C134 40 142 22 152 24 C160 20 160 60 160 60 Z" fill="#4f6b3f"/><rect x="146" y="56" width="10" height="14" fill="#a9a49c"/>
<ellipse cx="78" cy="56" rx="18" ry="28" fill="#cdb087"/><path d="M60 56 C58 70 56 80 57 90 H101 C102 80 99 68 96 56 Z" fill="#c9aa80"/>
<ellipse cx="77" cy="53" rx="12.6" ry="16.4" fill="#dcb7a2"/>
<path d="M63 50 C63 36 71 30 79 30.6 C88 31 93 39 92 53 C89 43 85 39 78 38.4 C70 38 65 43 63 50 Z" fill="#c9aa7c"/>
<ellipse cx="72.6" cy="53.6" rx="2.6" ry="1" fill="#5a4034"/><ellipse cx="84.6" cy="53.6" rx="2.6" ry="1" fill="#5a4034"/>
<ellipse cx="78.6" cy="66" rx="3.6" ry="1.3" fill="#b86a62"/>
<path d="M60 88 C62 76 72 74 78 76 C86 74 96 76 100 88 Z" fill="#e9e3dc"/></svg></div>
<div class="abs" style="left:1152.80px;top:472.40px;width:72.20px;height:78.00px;background:#5a2ebd;border-radius:6px 6px 0 0"></div>
<div class="t" id="t103" style="transform:scaleX(0.9884);left:1176.60px;top:487.58px;font-size:37.00px;line-height:44.40px;color:#fff;">A</div>
<div class="abs" style="left:1108.00px;top:281.60px;width:162.00px;height:92.40px;background:transparent;border:2.4px solid #24dba0"></div>
<div class="abs" style="left:1111.00px;top:172.00px;width:152.40px;height:19.40px;background:rgba(28,28,30,.9);border-radius:4px"></div>
<svg class="abs" style="left:1113.40px;top:174.80px;" width="13.8" height="14.2" viewBox="0.2 0.4 10.2 11.8"><path d="M5.2 1 C6.4 1 7.2 1.8 7.2 3 V6 C7.2 7.2 6.4 8 5.2 8 C4 8 3.2 7.2 3.2 6 V3 C3.2 1.8 4 1 5.2 1 Z" fill="#e8453c"/><path d="M1.6 5.6 C1.6 8 3.2 9.4 5.2 9.4 C7.2 9.4 8.8 8 8.8 5.6 M5.2 9.4 V11.4 M3.2 11.6 H7.2" fill="none" stroke="#e8453c" stroke-width="1"/><path d="M1 11 L9.6 1.2" stroke="#e8453c" stroke-width="1.5" stroke-linecap="round"/></svg>
<div class="t" id="t104" style="transform:scaleX(1.0251);left:1133.70px;top:174.87px;font-size:12.60px;line-height:15.12px;color:#fff;">Катерина Бояринова</div>
<div class="abs" style="left:1111.00px;top:262.00px;width:83.40px;height:18.80px;background:rgba(28,28,30,.9);border-radius:4px"></div>
<svg class="abs" style="left:1113.40px;top:264.80px;" width="13.8" height="14.2" viewBox="0.2 0.4 10.2 11.8"><path d="M5.2 1 C6.4 1 7.2 1.8 7.2 3 V6 C7.2 7.2 6.4 8 5.2 8 C4 8 3.2 7.2 3.2 6 V3 C3.2 1.8 4 1 5.2 1 Z" fill="#e8453c"/><path d="M1.6 5.6 C1.6 8 3.2 9.4 5.2 9.4 C7.2 9.4 8.8 8 8.8 5.6 M5.2 9.4 V11.4 M3.2 11.6 H7.2" fill="none" stroke="#e8453c" stroke-width="1"/><path d="M1 11 L9.6 1.2" stroke="#e8453c" stroke-width="1.5" stroke-linecap="round"/></svg>
<div class="t" id="t105" style="transform:scaleX(1.0156);left:1133.70px;top:264.57px;font-size:12.60px;line-height:15.12px;color:#fff;">Olha Vovk</div>
<div class="abs" style="left:1111.00px;top:352.60px;width:104.80px;height:18.20px;background:rgba(28,28,30,.9);border-radius:4px"></div>
<div class="t" id="t106" style="transform:scaleX(1.0563);left:1115.00px;top:354.87px;font-size:12.60px;line-height:15.12px;color:#fff;">Вікторія Чобіток</div>
<div class="abs" style="left:1111.00px;top:442.20px;width:129.80px;height:18.40px;background:rgba(28,28,30,.9);border-radius:4px"></div>
<svg class="abs" style="left:1113.40px;top:445.00px;" width="13.8" height="14.2" viewBox="0.2 0.4 10.2 11.8"><path d="M5.2 1 C6.4 1 7.2 1.8 7.2 3 V6 C7.2 7.2 6.4 8 5.2 8 C4 8 3.2 7.2 3.2 6 V3 C3.2 1.8 4 1 5.2 1 Z" fill="#e8453c"/><path d="M1.6 5.6 C1.6 8 3.2 9.4 5.2 9.4 C7.2 9.4 8.8 8 8.8 5.6 M5.2 9.4 V11.4 M3.2 11.6 H7.2" fill="none" stroke="#e8453c" stroke-width="1"/><path d="M1 11 L9.6 1.2" stroke="#e8453c" stroke-width="1.5" stroke-linecap="round"/></svg>
<div class="t" id="t107" style="transform:scaleX(0.9999);left:1133.70px;top:444.57px;font-size:12.60px;line-height:15.12px;color:#fff;">Svitlana Turlakova</div>
<div class="abs" style="left:1111.00px;top:532.40px;width:131.40px;height:19.60px;background:rgba(28,28,30,.9);border-radius:4px"></div>
<svg class="abs" style="left:1113.40px;top:535.20px;" width="13.8" height="14.2" viewBox="0.2 0.4 10.2 11.8"><path d="M5.2 1 C6.4 1 7.2 1.8 7.2 3 V6 C7.2 7.2 6.4 8 5.2 8 C4 8 3.2 7.2 3.2 6 V3 C3.2 1.8 4 1 5.2 1 Z" fill="#e8453c"/><path d="M1.6 5.6 C1.6 8 3.2 9.4 5.2 9.4 C7.2 9.4 8.8 8 8.8 5.6 M5.2 9.4 V11.4 M3.2 11.6 H7.2" fill="none" stroke="#e8453c" stroke-width="1"/><path d="M1 11 L9.6 1.2" stroke="#e8453c" stroke-width="1.5" stroke-linecap="round"/></svg>
<div class="t" id="t108" style="transform:scaleX(1.0265);left:1133.70px;top:535.37px;font-size:12.60px;line-height:15.12px;color:#fff;">Andriy Matviychuk</div>
</div></div>
<div class="abs" style="left:1152.40px;top:551.80px;width:73.40px;height:35.60px;background:#161618;border-radius:0 0 5px 5px"></div>
<svg class="abs" style="left:1181.60px;top:566.00px;" width="14" height="9" viewBox="0 0 14 9"><path d="M1.4 1.4 L7 7 L12.6 1.4" fill="none" stroke="#b9b9bd" stroke-width="1.5" stroke-linecap="round" stroke-linejoin="round"/></svg>
<svg class="abs" style="left:29.40px;top:619.60px;" width="23" height="24.6" viewBox="0 0 26 28"><rect x="8.6" y="1" width="8.4" height="15.4" rx="4.2" fill="none" stroke="#fff" stroke-width="1.5"/><path d="M4.6 12 C4.6 17.4 8.4 20.4 12.8 20.4 C17.2 20.4 21 17.4 21 12 M12.8 20.4 V25.6 M8 26 H17.6" fill="none" stroke="#fff" stroke-width="1.5" stroke-linecap="round"/><path d="M2.6 23.6 L22.4 1.6" stroke="#ea3a6a" stroke-width="2.2" stroke-linecap="round"/></svg>
<svg class="abs" style="left:68.30px;top:627.80px;" width="9" height="6" viewBox="0 0 9 6"><path d="M1 4.8 L4.5 1.3 L8 4.8" fill="none" stroke="#fff" stroke-width="1.5" stroke-linecap="round" stroke-linejoin="round"/></svg>
<div class="t" id="t109" style="transform:scaleX(0.9778);left:25.40px;top:646.86px;font-size:12.40px;line-height:14.88px;color:#fff;-webkit-text-stroke:.3px #fff;">Audio</div>
<svg class="abs" style="left:121.60px;top:623.40px;" width="26" height="16" viewBox="0 0 26 16"><rect x=".9" y=".9" width="17" height="14" rx="3.4" fill="none" stroke="#fff" stroke-width="1.5"/><path d="M18 6 L24.6 2.4 V13.4 L18 9.8" fill="none" stroke="#fff" stroke-width="1.5" stroke-linejoin="round"/></svg>
<svg class="abs" style="left:166.10px;top:627.80px;" width="9" height="6" viewBox="0 0 9 6"><path d="M1 4.8 L4.5 1.3 L8 4.8" fill="none" stroke="#fff" stroke-width="1.5" stroke-linecap="round" stroke-linejoin="round"/></svg>
<div class="t" id="t110" style="transform:scaleX(0.9851);left:118.00px;top:646.86px;font-size:12.40px;line-height:14.88px;color:#fff;-webkit-text-stroke:.3px #fff;">Video</div>
<svg class="abs" style="left:347.40px;top:621.40px;" width="20" height="19" viewBox="0 0 20 19"><circle cx="7" cy="5" r="3.4" fill="none" stroke="#fff" stroke-width="1.5"/><path d="M.9 17.6 V15 C.9 11.8 3.4 10.4 7 10.4 C10.6 10.4 13 11.8 13 15 V17.6 Z" fill="none" stroke="#fff" stroke-width="1.5" stroke-linejoin="round"/><circle cx="14.4" cy="4" r="2.7" fill="none" stroke="#fff" stroke-width="1.4"/><path d="M14.6 8.8 C17.4 8.8 19 10.2 19 12.6 V14.4 H15.4" fill="none" stroke="#fff" stroke-width="1.4" stroke-linejoin="round"/></svg>
<div class="t" id="t111" style="transform:scaleX(1.0073);left:373.60px;top:621.82px;font-size:11.60px;line-height:13.92px;color:#b3bbd6;">63</div>
<svg class="abs" style="left:404.90px;top:627.80px;" width="9" height="6" viewBox="0 0 9 6"><path d="M1 4.8 L4.5 1.3 L8 4.8" fill="none" stroke="#fff" stroke-width="1.5" stroke-linecap="round" stroke-linejoin="round"/></svg>
<div class="t" id="t112" style="transform:scaleX(0.9498);left:326.50px;top:646.86px;font-size:12.40px;line-height:14.88px;color:#fff;-webkit-text-stroke:.3px #fff;">Participants</div>
<svg class="abs" style="left:454.40px;top:620.40px;" width="25" height="23" viewBox="0 0 25 23"><path d="M7.4 1 H19.6 C22 1 23.8 2.8 23.8 5.2 V10 C23.8 12.2 22.2 14 20 14.2" fill="none" stroke="#fff" stroke-width="1.5" stroke-linecap="round"/><path d="M5 4.8 H15.4 C17.8 4.8 19.4 6.4 19.4 8.8 V13.6 C19.4 16 17.8 17.6 15.4 17.6 H9.4 L5 21.6 V17.6 C2.6 17.6 1 16 1 13.6 V8.8 C1 6.4 2.6 4.8 5 4.8 Z" fill="none" stroke="#fff" stroke-width="1.5" stroke-linejoin="round"/><circle cx="6.4" cy="11.2" r="1.1" fill="#fff"/><circle cx="10.2" cy="11.2" r="1.1" fill="#fff"/><circle cx="14" cy="11.2" r="1.1" fill="#fff"/></svg>
<svg class="abs" style="left:495.50px;top:627.80px;" width="9" height="6" viewBox="0 0 9 6"><path d="M1 4.8 L4.5 1.3 L8 4.8" fill="none" stroke="#fff" stroke-width="1.5" stroke-linecap="round" stroke-linejoin="round"/></svg>
<div class="t" id="t113" style="transform:scaleX(0.9012);left:454.80px;top:646.86px;font-size:12.40px;line-height:14.88px;color:#fff;-webkit-text-stroke:.3px #fff;">Chat</div>
<svg class="abs" style="left:539.20px;top:621.60px;" width="26" height="22" viewBox="0 0 26 22"><path d="M13 20.4 C6 15.4 1.2 11.4 1.2 6.6 C1.2 3.4 3.6 1.2 6.6 1.2 C9.2 1.2 11.4 2.6 13 5 C14.6 2.6 16.8 1.2 19.4 1.2 C22.4 1.2 24.8 3.4 24.8 6.6 C24.8 11.4 20 15.4 13 20.4 Z" fill="none" stroke="#fff" stroke-width="1.5" stroke-linejoin="round"/></svg>
<svg class="abs" style="left:575.30px;top:627.80px;" width="9" height="6" viewBox="0 0 9 6"><path d="M1 4.8 L4.5 1.3 L8 4.8" fill="none" stroke="#fff" stroke-width="1.5" stroke-linecap="round" stroke-linejoin="round"/></svg>
<div class="t" id="t114" style="transform:scaleX(0.8834);left:537.00px;top:646.86px;font-size:12.40px;line-height:14.88px;color:#fff;-webkit-text-stroke:.3px #fff;">React</div>
<div class="abs" style="left:628.60px;top:621.60px;width:24.80px;height:20.20px;background:#1fd47e;border-radius:4.4px"></div>
<svg class="abs" style="left:635.00px;top:625.00px;" width="12" height="14" viewBox="0 0 12 14"><path d="M6 12.6 V3 M1.6 6.6 L6 1.8 L10.4 6.6" fill="none" stroke="#0d2a4a" stroke-width="2.2" stroke-linecap="round" stroke-linejoin="round"/></svg>
<div class="t" id="t115" style="transform:scaleX(0.8888);left:626.20px;top:646.86px;font-size:12.40px;line-height:14.88px;color:#fff;-webkit-text-stroke:.3px #fff;">Share</div>
<svg class="abs" style="left:722.60px;top:619.20px;" width="26" height="25" viewBox="0 0 26 25"><path d="M11.6 3.4 C12.8 10 14.8 12 21.4 13.2 C14.8 14.4 12.8 16.4 11.6 23 C10.4 16.4 8.4 14.4 1.8 13.2 C8.4 12 10.4 10 11.6 3.4 Z" fill="#a9d4ff"/><path d="M11.6 3.4 C12.8 10 14.8 12 21.4 13.2 C16 13.2 12 13.2 1.8 13.2 C8.4 12 10.4 10 11.6 3.4 Z" fill="#d5ecff"/><path d="M21.4 .6 C21.8 2.8 22.4 3.4 24.6 3.8 C22.4 4.2 21.8 4.8 21.4 7 C21 4.8 20.4 4.2 18.2 3.8 C20.4 3.4 21 2.8 21.4 .6 Z" fill="#cfe8ff"/></svg>
<div class="t" id="t116" style="transform:scaleX(0.9792);left:697.70px;top:646.86px;font-size:12.40px;line-height:14.88px;color:#fff;-webkit-text-stroke:.3px #fff;">AI Companion</div>
<svg class="abs" style="left:811.00px;top:621.40px;" width="24" height="22" viewBox="0 0 24 22"><rect x="1" y="1" width="8.4" height="8.4" rx="3" fill="none" stroke="#fff" stroke-width="1.5"/><circle cx="18.6" cy="5.2" r="4.2" fill="none" stroke="#fff" stroke-width="1.5"/><circle cx="5.2" cy="16.6" r="4.2" fill="none" stroke="#fff" stroke-width="1.5"/><path d="M14.4 16.8 V13.4 M14.4 19.6 C14.4 20.6 15 21 16 21 H20.6 C22 21 22.8 20.2 22.8 18.8 V13.4" fill="none" stroke="#fff" stroke-width="1.5" stroke-linecap="round"/></svg>
<div class="t" id="t117" style="transform:scaleX(0.9522);left:808.90px;top:646.86px;font-size:12.40px;line-height:14.88px;color:#fff;-webkit-text-stroke:.3px #fff;">Apps</div>
<svg class="abs" style="left:890.40px;top:619.40px;" width="24" height="24" viewBox="0 0 24 24"><circle cx="12" cy="12" r="10.6" fill="none" stroke="#fff" stroke-width="1.5"/><circle cx="12" cy="12" r="4.6" fill="#fff"/></svg>
<div class="t" id="t118" style="transform:scaleX(0.8961);left:884.80px;top:646.86px;font-size:12.40px;line-height:14.88px;color:#fff;-webkit-text-stroke:.3px #fff;">Record</div>
<svg class="abs" style="left:979.00px;top:619.40px;" width="24" height="24" viewBox="0 0 24 24"><circle cx="12" cy="12" r="10.6" fill="none" stroke="#fff" stroke-width="1.5"/><circle cx="12" cy="7" r="1.3" fill="#fff"/><path d="M10 10.6 H12.4 V17 M9.6 17.2 H14.8" fill="none" stroke="#fff" stroke-width="1.5" stroke-linecap="round" stroke-linejoin="round"/></svg>
<div class="t" id="t119" style="transform:scaleX(1.0027);left:958.30px;top:646.86px;font-size:12.40px;line-height:14.88px;color:#fff;-webkit-text-stroke:.3px #fff;">Meeting info</div>
<svg class="abs" style="left:1071.00px;top:619.00px;" width="24" height="24" viewBox="0 0 24 24"><circle cx="12" cy="12" r="10.8" fill="none" stroke="#fff" stroke-width="1.4"/><circle cx="7.4" cy="12" r="1.2" fill="#fff"/><circle cx="12" cy="12" r="1.2" fill="#fff"/><circle cx="16.6" cy="12" r="1.2" fill="#fff"/></svg>
<div class="t" id="t120" style="transform:scaleX(0.9634);left:1069.80px;top:646.86px;font-size:12.40px;line-height:14.88px;color:#fff;-webkit-text-stroke:.3px #fff;">More</div>
<svg class="abs" style="left:1264.00px;top:618.40px;" width="26" height="25" viewBox="0 0 26 25"><path d="M11 2 L19.4 .8 V20.6 L11 21.6" fill="none" stroke="#f0288a" stroke-width="1.4" stroke-linejoin="round"/><path d="M19.4 .8 H23 V20.6 H19.4" fill="none" stroke="#f0288a" stroke-width="1.4" stroke-linejoin="round"/><circle cx="8" cy="5.4" r="2.2" fill="none" stroke="#fff" stroke-width="1.4"/><path d="M6.4 9.4 C4.6 9.8 3.4 11 3 13.4 M6.4 9.4 C8 9 9.4 9.6 10 11.4 L12.6 13 M6.2 9.6 L6.6 15.4 L3.4 22.6 M6.6 15.4 L10 18 L10.6 22.6" fill="none" stroke="#fff" stroke-width="1.5" stroke-linecap="round" stroke-linejoin="round"/></svg>
<div class="t" id="t121" style="transform:scaleX(0.8677);left:1262.00px;top:646.86px;font-size:12.40px;line-height:14.88px;color:#fff;-webkit-text-stroke:.3px #fff;">Leave</div>
</body>
</html>
